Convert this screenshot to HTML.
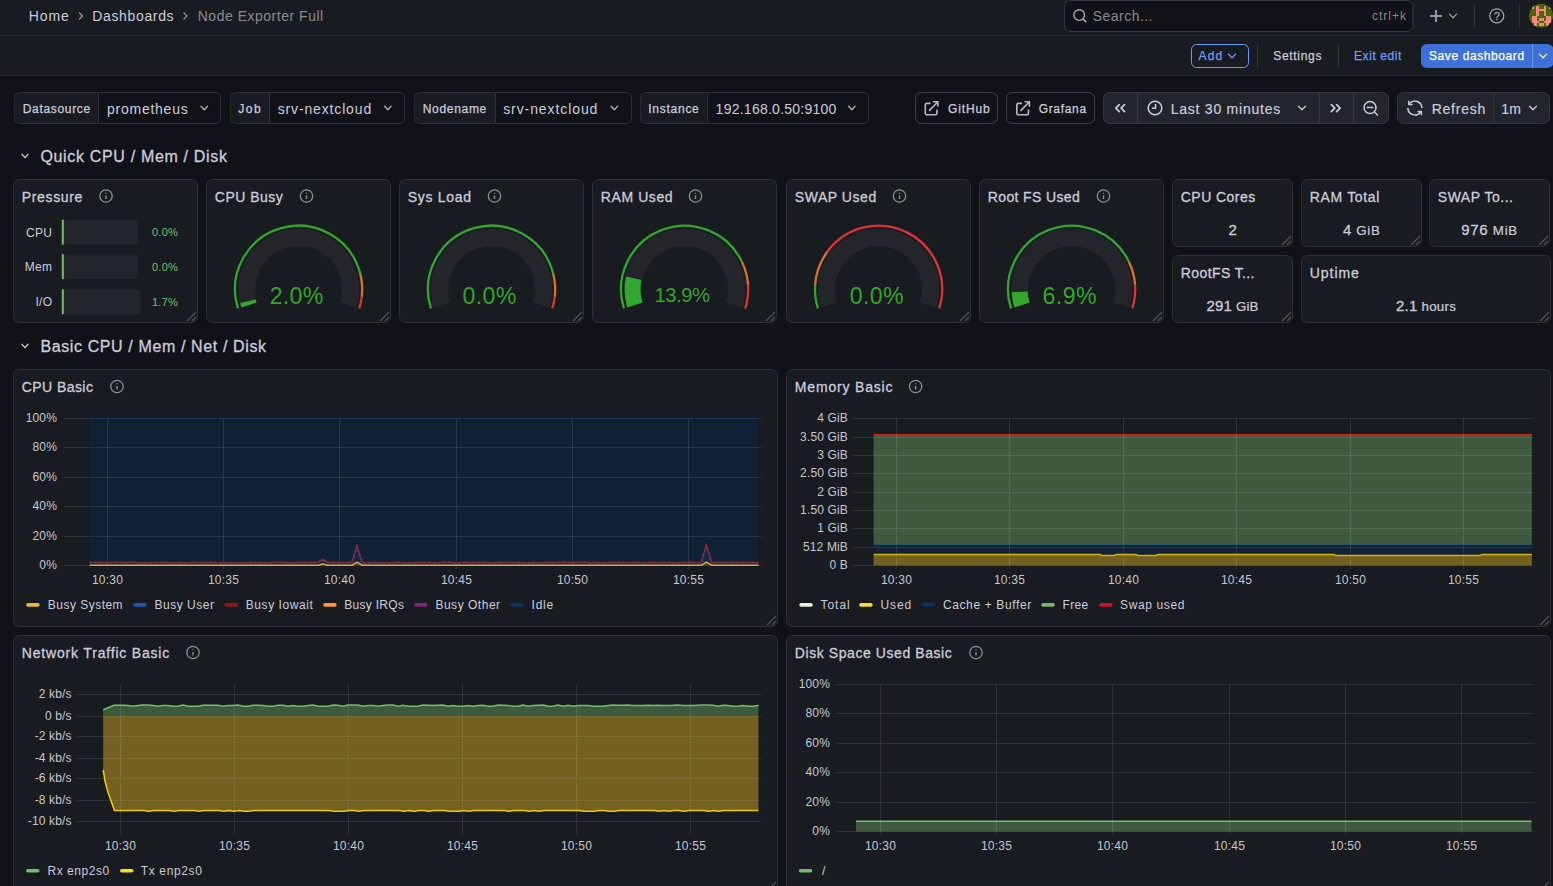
<!DOCTYPE html><html><head><meta charset="utf-8"><style>html,body{margin:0;padding:0;background:#111217;overflow:hidden}svg{display:block}</style></head><body><svg width="1553" height="886" viewBox="0 0 1553 886" font-family="Liberation Sans, sans-serif"><rect x="0" y="0" width="1553" height="886" rx="0" fill="#111217"/><rect x="0" y="0" width="1553" height="35" rx="0" fill="#181b1f"/><rect x="0" y="35" width="1553" height="1" rx="0" fill="#2a2c31"/><rect x="0" y="36" width="1553" height="39" rx="0" fill="#181b1f"/><rect x="0" y="75" width="1553" height="1" rx="0" fill="#2a2c31"/><text x="28.7" y="21" font-size="14" fill="#ccccdc" font-weight="400" text-anchor="start" textLength="40.1" lengthAdjust="spacing" >Home</text><path d="M79,12.5 L82.5,16 L79,19.5" stroke="rgba(204,204,220,0.65)" fill="none" stroke-width="1.3" /><text x="92.2" y="21" font-size="14" fill="#ccccdc" font-weight="400" text-anchor="start" textLength="81.4" lengthAdjust="spacing" >Dashboards</text><path d="M183.5,12.5 L187,16 L183.5,19.5" stroke="rgba(204,204,220,0.65)" fill="none" stroke-width="1.3" /><text x="197.7" y="21" font-size="14" fill="rgba(204,204,220,0.65)" font-weight="400" text-anchor="start" textLength="125.5" lengthAdjust="spacing" >Node Exporter Full</text><rect x="1064.5" y="0.5" width="348.5" height="31" rx="6" fill="#111217" stroke="#34363b" stroke-width="1"/><circle cx="1079.2" cy="15.1" r="5.3" stroke="#a8a8b2" stroke-width="1.4" fill="none"/><line x1="1083" y1="18.9" x2="1086.2" y2="22.1" stroke="#a8a8b2" stroke-width="1.5" /><text x="1092.7" y="21" font-size="14" fill="rgba(204,204,220,0.65)" font-weight="400" text-anchor="start" textLength="59.8" lengthAdjust="spacing" >Search...</text><text x="1371.9" y="20" font-size="12" fill="rgba(204,204,220,0.65)" font-weight="400" text-anchor="start" textLength="34" lengthAdjust="spacing" >ctrl+k</text><line x1="1430" y1="16" x2="1442" y2="16" stroke="#a0a1aa" stroke-width="1.8" /><line x1="1436" y1="10" x2="1436" y2="22" stroke="#a0a1aa" stroke-width="1.8" /><path d="M1449.5,14.1 L1453,17.9 L1456.5,14.1" stroke="#a0a1aa" fill="none" stroke-width="1.3" stroke-linecap="round" stroke-linejoin="round"/><line x1="1474.5" y1="4" x2="1474.5" y2="28" stroke="#2f3136" stroke-width="1" /><circle cx="1496.8" cy="15.8" r="7" stroke="#a0a1aa" stroke-width="1.3" fill="none"/><text x="1496.9" y="19.6" font-size="10.5" fill="#a0a1aa" font-weight="400" text-anchor="middle" letter-spacing="0" stroke="#a0a1aa" stroke-width="0.3" >?</text><line x1="1519.5" y1="4" x2="1519.5" y2="28" stroke="#2f3136" stroke-width="1" /><clipPath id="av"><circle cx="1541" cy="15.8" r="12"/></clipPath><g clip-path="url(#av)" shape-rendering="crispEdges"><rect x="1528" y="3" width="26" height="26" fill="#476608"/><rect x="1531.60" y="6.10" width="2.6" height="2.6" fill="#f08a7e"/><rect x="1536.44" y="6.10" width="2.6" height="2.6" fill="#f08a7e"/><rect x="1543.70" y="6.10" width="2.6" height="2.6" fill="#f08a7e"/><rect x="1548.54" y="6.10" width="2.6" height="2.6" fill="#f08a7e"/><rect x="1536.44" y="8.52" width="2.6" height="2.6" fill="#f08a7e"/><rect x="1538.86" y="8.52" width="2.6" height="2.6" fill="#f08a7e"/><rect x="1541.28" y="8.52" width="2.6" height="2.6" fill="#f08a7e"/><rect x="1543.70" y="8.52" width="2.6" height="2.6" fill="#f08a7e"/><rect x="1536.44" y="10.94" width="2.6" height="2.6" fill="#f08a7e"/><rect x="1543.70" y="10.94" width="2.6" height="2.6" fill="#f08a7e"/><rect x="1536.44" y="13.36" width="2.6" height="2.6" fill="#f08a7e"/><rect x="1543.70" y="13.36" width="2.6" height="2.6" fill="#f08a7e"/><rect x="1531.60" y="15.78" width="2.6" height="2.6" fill="#f08a7e"/><rect x="1534.02" y="15.78" width="2.6" height="2.6" fill="#f08a7e"/><rect x="1546.12" y="15.78" width="2.6" height="2.6" fill="#f08a7e"/><rect x="1548.54" y="15.78" width="2.6" height="2.6" fill="#f08a7e"/><rect x="1531.60" y="18.20" width="2.6" height="2.6" fill="#f08a7e"/><rect x="1534.02" y="18.20" width="2.6" height="2.6" fill="#f08a7e"/><rect x="1538.86" y="18.20" width="2.6" height="2.6" fill="#f08a7e"/><rect x="1541.28" y="18.20" width="2.6" height="2.6" fill="#f08a7e"/><rect x="1546.12" y="18.20" width="2.6" height="2.6" fill="#f08a7e"/><rect x="1548.54" y="18.20" width="2.6" height="2.6" fill="#f08a7e"/><rect x="1531.60" y="20.62" width="2.6" height="2.6" fill="#f08a7e"/><rect x="1534.02" y="20.62" width="2.6" height="2.6" fill="#f08a7e"/><rect x="1536.44" y="20.62" width="2.6" height="2.6" fill="#f08a7e"/><rect x="1543.70" y="20.62" width="2.6" height="2.6" fill="#f08a7e"/><rect x="1546.12" y="20.62" width="2.6" height="2.6" fill="#f08a7e"/><rect x="1548.54" y="20.62" width="2.6" height="2.6" fill="#f08a7e"/><rect x="1534.02" y="23.04" width="2.6" height="2.6" fill="#f08a7e"/><rect x="1538.86" y="23.04" width="2.6" height="2.6" fill="#f08a7e"/><rect x="1541.28" y="23.04" width="2.6" height="2.6" fill="#f08a7e"/><rect x="1546.12" y="23.04" width="2.6" height="2.6" fill="#f08a7e"/></g><rect x="1191.5" y="44.5" width="57" height="23" rx="5" fill="none" stroke="#6e9fff" stroke-width="1"/><text x="1198.6000000000001" y="60" font-size="12" fill="#6e9fff" font-weight="400" text-anchor="start" textLength="23.5" lengthAdjust="spacing" stroke="#6e9fff" stroke-width="0.25" >Add</text><path d="M1228.5,54.1 L1232,57.9 L1235.5,54.1" stroke="#6e9fff" fill="none" stroke-width="1.3" stroke-linecap="round" stroke-linejoin="round"/><line x1="1257.5" y1="44" x2="1257.5" y2="68" stroke="#2f3136" stroke-width="1" /><text x="1273.3" y="60" font-size="12" fill="#ccccdc" font-weight="400" text-anchor="start" textLength="48.1" lengthAdjust="spacing" stroke="#ccccdc" stroke-width="0.25" >Settings</text><line x1="1338.5" y1="44" x2="1338.5" y2="68" stroke="#2f3136" stroke-width="1" /><text x="1354.0" y="60" font-size="12" fill="#6e9fff" font-weight="400" text-anchor="start" textLength="47.3" lengthAdjust="spacing" stroke="#6e9fff" stroke-width="0.25" >Exit edit</text><rect x="1421" y="44" width="132.5" height="24" rx="6" fill="#3d71d9"/><text x="1429.0" y="60" font-size="12" fill="#ffffff" font-weight="400" text-anchor="start" textLength="95.1" lengthAdjust="spacing" stroke="#ffffff" stroke-width="0.25" >Save dashboard</text><line x1="1532.5" y1="44" x2="1532.5" y2="68" stroke="rgba(255,255,255,0.25)" stroke-width="1" /><path d="M1539.5,54.1 L1543,57.9 L1546.5,54.1" stroke="#ffffff" fill="none" stroke-width="1.3" stroke-linecap="round" stroke-linejoin="round"/><rect x="14.5" y="92.5" width="206" height="31" rx="5" fill="#111217" stroke="#2f3136" stroke-width="1"/><path d="M98,93 L19.5,93 A5,5 0 0 0 14.5,98 L14.5,118 A5,5 0 0 0 19.5,123 L98,123 Z" fill="#181b1f"/><line x1="98.5" y1="92.5" x2="98.5" y2="123.5" stroke="#2f3136" stroke-width="1" /><text x="22.7" y="112.5" font-size="12" fill="#ccccdc" font-weight="400" text-anchor="start" textLength="67.5" lengthAdjust="spacing" stroke="#ccccdc" stroke-width="0.25" >Datasource</text><text x="107.0" y="113.5" font-size="14" fill="#ccccdc" font-weight="400" text-anchor="start" textLength="80.7" lengthAdjust="spacing" >prometheus</text><path d="M201.05,106.25 L204.3,109.75 L207.55,106.25" stroke="#b0b0ba" fill="none" stroke-width="1.3" stroke-linecap="round" stroke-linejoin="round"/><rect x="230.5" y="92.5" width="174" height="31" rx="5" fill="#111217" stroke="#2f3136" stroke-width="1"/><path d="M269,93 L235.5,93 A5,5 0 0 0 230.5,98 L230.5,118 A5,5 0 0 0 235.5,123 L269,123 Z" fill="#181b1f"/><line x1="269.5" y1="92.5" x2="269.5" y2="123.5" stroke="#2f3136" stroke-width="1" /><text x="238.2" y="112.5" font-size="12" fill="#ccccdc" font-weight="400" text-anchor="start" textLength="22.5" lengthAdjust="spacing" stroke="#ccccdc" stroke-width="0.25" >Job</text><text x="277.7" y="113.5" font-size="14" fill="#ccccdc" font-weight="400" text-anchor="start" textLength="93.5" lengthAdjust="spacing" >srv-nextcloud</text><path d="M384.55,106.25 L387.8,109.75 L391.05,106.25" stroke="#b0b0ba" fill="none" stroke-width="1.3" stroke-linecap="round" stroke-linejoin="round"/><rect x="414.5" y="92.5" width="217" height="31" rx="5" fill="#111217" stroke="#2f3136" stroke-width="1"/><path d="M495,93 L419.5,93 A5,5 0 0 0 414.5,98 L414.5,118 A5,5 0 0 0 419.5,123 L495,123 Z" fill="#181b1f"/><line x1="495.5" y1="92.5" x2="495.5" y2="123.5" stroke="#2f3136" stroke-width="1" /><text x="422.7" y="112.5" font-size="12" fill="#ccccdc" font-weight="400" text-anchor="start" textLength="63.6" lengthAdjust="spacing" stroke="#ccccdc" stroke-width="0.25" >Nodename</text><text x="503.2" y="113.5" font-size="14" fill="#ccccdc" font-weight="400" text-anchor="start" textLength="94.2" lengthAdjust="spacing" >srv-nextcloud</text><path d="M611.05,106.25 L614.3,109.75 L617.55,106.25" stroke="#b0b0ba" fill="none" stroke-width="1.3" stroke-linecap="round" stroke-linejoin="round"/><rect x="640.5" y="92.5" width="228" height="31" rx="5" fill="#111217" stroke="#2f3136" stroke-width="1"/><path d="M707,93 L645.5,93 A5,5 0 0 0 640.5,98 L640.5,118 A5,5 0 0 0 645.5,123 L707,123 Z" fill="#181b1f"/><line x1="707.5" y1="92.5" x2="707.5" y2="123.5" stroke="#2f3136" stroke-width="1" /><text x="648.2" y="112.5" font-size="12" fill="#ccccdc" font-weight="400" text-anchor="start" textLength="50.6" lengthAdjust="spacing" stroke="#ccccdc" stroke-width="0.25" >Instance</text><text x="715.6" y="113.5" font-size="14" fill="#ccccdc" font-weight="400" text-anchor="start" textLength="120.8" lengthAdjust="spacing" >192.168.0.50:9100</text><path d="M848.55,106.25 L851.8,109.75 L855.05,106.25" stroke="#b0b0ba" fill="none" stroke-width="1.3" stroke-linecap="round" stroke-linejoin="round"/><rect x="915.5" y="92.5" width="82" height="31" rx="6" fill="none" stroke="#3e4046" stroke-width="1"/><path d="M930.5,103.4 L926.8,103.4 Q925.3,103.4 925.3,104.9 L925.3,113.2 Q925.3,114.7 926.8,114.7 L935.5,114.7 Q937.0,114.7 937.0,113.2 L937.0,109.60000000000001" stroke="#b8b8c4" fill="none" stroke-width="1.6" /><path d="M929.5,110.4 L937.6999999999999,102.0" stroke="#b8b8c4" fill="none" stroke-width="1.6" stroke-linecap="round"/><path d="M933.5999999999999,101.80000000000001 L937.9,101.80000000000001 L937.9,106.10000000000001" stroke="#b8b8c4" fill="none" stroke-width="1.6" stroke-linecap="round" stroke-linejoin="round"/><text x="948.0" y="113" font-size="12" fill="#ccccdc" font-weight="400" text-anchor="start" textLength="41.8" lengthAdjust="spacing" stroke="#ccccdc" stroke-width="0.25" >GitHub</text><rect x="1006.5" y="92.5" width="88" height="31" rx="6" fill="none" stroke="#3e4046" stroke-width="1"/><path d="M1022.0,103.4 L1018.3,103.4 Q1016.8,103.4 1016.8,104.9 L1016.8,113.2 Q1016.8,114.7 1018.3,114.7 L1027.0,114.7 Q1028.5,114.7 1028.5,113.2 L1028.5,109.60000000000001" stroke="#b8b8c4" fill="none" stroke-width="1.6" /><path d="M1021.0,110.4 L1029.2,102.0" stroke="#b8b8c4" fill="none" stroke-width="1.6" stroke-linecap="round"/><path d="M1025.1,101.80000000000001 L1029.3999999999999,101.80000000000001 L1029.3999999999999,106.10000000000001" stroke="#b8b8c4" fill="none" stroke-width="1.6" stroke-linecap="round" stroke-linejoin="round"/><text x="1038.7" y="113" font-size="12" fill="#ccccdc" font-weight="400" text-anchor="start" textLength="47.4" lengthAdjust="spacing" stroke="#ccccdc" stroke-width="0.25" >Grafana</text><rect x="1103.5" y="92.5" width="285" height="31" rx="6" fill="#22252b" stroke="#34363c" stroke-width="1"/><line x1="1137.5" y1="93" x2="1137.5" y2="123" stroke="#34363c" stroke-width="1" /><line x1="1319.5" y1="93" x2="1319.5" y2="123" stroke="#34363c" stroke-width="1" /><line x1="1353.5" y1="93" x2="1353.5" y2="123" stroke="#34363c" stroke-width="1" /><path d="M1119.3,104.6 L1115.8,108.1 L1119.3,111.6 M1124.6,104.6 L1121.1,108.1 L1124.6,111.6" stroke="#ccccdc" fill="none" stroke-width="1.8" stroke-linecap="round" stroke-linejoin="round"/><circle cx="1155" cy="108" r="6.8" stroke="#ccccdc" stroke-width="1.5" fill="none"/><path d="M1155.5,104 L1155.5,108.3 L1152,108.3" stroke="#ccccdc" fill="none" stroke-width="1.5" /><text x="1170.7" y="113.5" font-size="14" fill="#ccccdc" font-weight="400" text-anchor="start" textLength="109.5" lengthAdjust="spacing" stroke="#ccccdc" stroke-width="0.2" >Last 30 minutes</text><path d="M1298.5,106.2 L1302,109.8 L1305.5,106.2" stroke="#ccccdc" fill="none" stroke-width="1.3" stroke-linecap="round" stroke-linejoin="round"/><path d="M1331.3,104.6 L1334.8,108.1 L1331.3,111.6 M1336.6,104.6 L1340.1,108.1 L1336.6,111.6" stroke="#ccccdc" fill="none" stroke-width="1.8" stroke-linecap="round" stroke-linejoin="round"/><circle cx="1370" cy="107.5" r="6" stroke="#ccccdc" stroke-width="1.5" fill="none"/><line x1="1366.5" y1="107.5" x2="1373.5" y2="107.5" stroke="#ccccdc" stroke-width="1.5" /><line x1="1374.5" y1="112" x2="1378" y2="115.5" stroke="#ccccdc" stroke-width="1.5" /><rect x="1397.5" y="92.5" width="152" height="31" rx="6" fill="#22252b" stroke="#34363c" stroke-width="1"/><line x1="1493.5" y1="93" x2="1493.5" y2="123" stroke="#34363c" stroke-width="1" /><path d="M1409.6,103.6 A7,7 0 0 1 1421.9,108 M1407.9,108 A7,7 0 0 0 1420.6,112" stroke="#ccccdc" fill="none" stroke-width="1.5" /><path d="M1408.8,100.8 L1408.8,104.5 L1412.6,104.5 M1417.6,111.5 L1421.4,111.5 L1421.4,115.2" stroke="#ccccdc" fill="none" stroke-width="1.5" stroke-linejoin="round"/><text x="1431.7" y="113.5" font-size="14" fill="#ccccdc" font-weight="400" text-anchor="start" textLength="53.5" lengthAdjust="spacing" stroke="#ccccdc" stroke-width="0.2" >Refresh</text><text x="1501.2" y="113.5" font-size="14" fill="#ccccdc" font-weight="400" text-anchor="start" textLength="19.7" lengthAdjust="spacing" stroke="#ccccdc" stroke-width="0.2" >1m</text><path d="M1529.5,106.2 L1533,109.8 L1536.5,106.2" stroke="#ccccdc" fill="none" stroke-width="1.3" stroke-linecap="round" stroke-linejoin="round"/><path d="M22.0,154.35 L25,157.65 L28.0,154.35" stroke="#ccccdc" fill="none" stroke-width="1.4" stroke-linecap="round" stroke-linejoin="round"/><text x="40.400000000000006" y="161.5" font-size="16" fill="#ccccdc" font-weight="400" text-anchor="start" textLength="186.5" lengthAdjust="spacing" stroke="#ccccdc" stroke-width="0.3" >Quick CPU / Mem / Disk</text><rect x="13.5" y="179.5" width="184.0" height="143.0" rx="6" fill="#181b1f" stroke="#2e3035" stroke-width="1"/><text x="21.8" y="201.5" font-size="14" fill="#ccccdc" font-weight="400" text-anchor="start" textLength="60.5" lengthAdjust="spacing" stroke="#ccccdc" stroke-width="0.3" >Pressure</text><line x1="187.0" y1="321.0" x2="196.0" y2="312.0" stroke="rgba(204,204,220,0.3)" stroke-width="1.2" /><line x1="192.0" y1="321.0" x2="196.0" y2="317.0" stroke="rgba(204,204,220,0.3)" stroke-width="1.2" /><circle cx="106" cy="196" r="6.2" stroke="rgba(204,204,220,0.65)" stroke-width="1.3" fill="none"/><line x1="106" y1="195.5" x2="106" y2="199" stroke="rgba(204,204,220,0.65)" stroke-width="1.4" /><line x1="106" y1="192.8" x2="106" y2="193.8" stroke="rgba(204,204,220,0.65)" stroke-width="1.4" /><text x="52.3" y="236.7" font-size="12" fill="#ccccdc" font-weight="400" text-anchor="end" letter-spacing="0.3" >CPU</text><rect x="63.5" y="219.7" width="74" height="25" rx="3" fill="#22252b"/><rect x="61.8" y="219.7" width="2" height="25" rx="0" fill="#73bf69"/><text x="178.2" y="236.2" font-size="11" fill="#73bf69" font-weight="400" text-anchor="end" letter-spacing="0.3" >0.0%</text><text x="52.3" y="271.2" font-size="12" fill="#ccccdc" font-weight="400" text-anchor="end" letter-spacing="0.3" >Mem</text><rect x="63.5" y="254.2" width="74" height="25" rx="3" fill="#22252b"/><rect x="61.8" y="254.2" width="2" height="25" rx="0" fill="#73bf69"/><text x="178.2" y="270.7" font-size="11" fill="#73bf69" font-weight="400" text-anchor="end" letter-spacing="0.3" >0.0%</text><text x="52.3" y="306.2" font-size="12" fill="#ccccdc" font-weight="400" text-anchor="end" letter-spacing="0.3" >I/O</text><rect x="63.5" y="289.2" width="77" height="25" rx="3" fill="#22252b"/><rect x="61.8" y="289.2" width="2" height="25" rx="0" fill="#73bf69"/><text x="178.2" y="305.7" font-size="11" fill="#73bf69" font-weight="400" text-anchor="end" letter-spacing="0.3" >1.7%</text><rect x="206.5" y="179.5" width="184.0" height="143.0" rx="6" fill="#181b1f" stroke="#2e3035" stroke-width="1"/><text x="214.79999999999998" y="201.5" font-size="14" fill="#ccccdc" font-weight="400" text-anchor="start" textLength="68" lengthAdjust="spacing" stroke="#ccccdc" stroke-width="0.3" >CPU Busy</text><line x1="380.0" y1="321.0" x2="389.0" y2="312.0" stroke="rgba(204,204,220,0.3)" stroke-width="1.2" /><line x1="385.0" y1="321.0" x2="389.0" y2="317.0" stroke="rgba(204,204,220,0.3)" stroke-width="1.2" /><path d="M248.96,305.00 A52.05,52.05 0 1 1 348.24,305.00" stroke="#23252b" fill="none" stroke-width="17.4" /><path d="M237.94,308.47 A63.6,63.6 0 1 1 360.10,273.16" stroke="rgba(50,172,45,0.97)" fill="none" stroke-width="2.3" /><path d="M360.10,273.16 A63.6,63.6 0 0 1 361.76,296.83" stroke="rgba(237,129,40,0.89)" fill="none" stroke-width="2.3" /><path d="M361.76,296.83 A63.6,63.6 0 0 1 359.26,308.47" stroke="rgba(245,54,54,0.9)" fill="none" stroke-width="2.3" /><path d="M248.96,305.00 A52.05,52.05 0 0 1 247.93,301.24" stroke="rgba(50,172,45,0.97)" fill="none" stroke-width="15.899999999999999" /><text x="269.7" y="303.5" font-size="23.2" fill="rgba(50,172,45,0.97)" font-weight="400" text-anchor="start" textLength="53.6" lengthAdjust="spacing" >2.0%</text><circle cx="306.5" cy="196" r="6.2" stroke="rgba(204,204,220,0.65)" stroke-width="1.3" fill="none"/><line x1="306.5" y1="195.5" x2="306.5" y2="199" stroke="rgba(204,204,220,0.65)" stroke-width="1.4" /><line x1="306.5" y1="192.8" x2="306.5" y2="193.8" stroke="rgba(204,204,220,0.65)" stroke-width="1.4" /><rect x="399.5" y="179.5" width="184.0" height="143.0" rx="6" fill="#181b1f" stroke="#2e3035" stroke-width="1"/><text x="407.8" y="201.5" font-size="14" fill="#ccccdc" font-weight="400" text-anchor="start" textLength="63.3" lengthAdjust="spacing" stroke="#ccccdc" stroke-width="0.3" >Sys Load</text><line x1="573.0" y1="321.0" x2="582.0" y2="312.0" stroke="rgba(204,204,220,0.3)" stroke-width="1.2" /><line x1="578.0" y1="321.0" x2="582.0" y2="317.0" stroke="rgba(204,204,220,0.3)" stroke-width="1.2" /><path d="M441.96,305.00 A52.05,52.05 0 1 1 541.24,305.00" stroke="#23252b" fill="none" stroke-width="17.4" /><path d="M430.94,308.47 A63.6,63.6 0 1 1 553.10,273.16" stroke="rgba(50,172,45,0.97)" fill="none" stroke-width="2.3" /><path d="M553.10,273.16 A63.6,63.6 0 0 1 554.76,296.83" stroke="rgba(237,129,40,0.89)" fill="none" stroke-width="2.3" /><path d="M554.76,296.83 A63.6,63.6 0 0 1 552.26,308.47" stroke="rgba(245,54,54,0.9)" fill="none" stroke-width="2.3" /><text x="462.59999999999997" y="303.5" font-size="23.2" fill="rgba(50,172,45,0.97)" font-weight="400" text-anchor="start" textLength="53.8" lengthAdjust="spacing" >0.0%</text><circle cx="494.5" cy="196" r="6.2" stroke="rgba(204,204,220,0.65)" stroke-width="1.3" fill="none"/><line x1="494.5" y1="195.5" x2="494.5" y2="199" stroke="rgba(204,204,220,0.65)" stroke-width="1.4" /><line x1="494.5" y1="192.8" x2="494.5" y2="193.8" stroke="rgba(204,204,220,0.65)" stroke-width="1.4" /><rect x="592.5" y="179.5" width="184.0" height="143.0" rx="6" fill="#181b1f" stroke="#2e3035" stroke-width="1"/><text x="600.8000000000001" y="201.5" font-size="14" fill="#ccccdc" font-weight="400" text-anchor="start" textLength="71.8" lengthAdjust="spacing" stroke="#ccccdc" stroke-width="0.3" >RAM Used</text><line x1="766.0" y1="321.0" x2="775.0" y2="312.0" stroke="rgba(204,204,220,0.3)" stroke-width="1.2" /><line x1="771.0" y1="321.0" x2="775.0" y2="317.0" stroke="rgba(204,204,220,0.3)" stroke-width="1.2" /><path d="M634.96,305.00 A52.05,52.05 0 1 1 734.24,305.00" stroke="#23252b" fill="none" stroke-width="17.4" /><path d="M623.94,308.47 A63.6,63.6 0 0 1 742.00,261.97" stroke="rgba(50,172,45,0.97)" fill="none" stroke-width="2.3" /><path d="M742.00,261.97 A63.6,63.6 0 0 1 748.05,284.91" stroke="rgba(237,129,40,0.89)" fill="none" stroke-width="2.3" /><path d="M748.05,284.91 A63.6,63.6 0 0 1 745.26,308.47" stroke="rgba(245,54,54,0.9)" fill="none" stroke-width="2.3" /><path d="M634.96,305.00 A52.05,52.05 0 0 1 633.76,278.19" stroke="rgba(50,172,45,0.97)" fill="none" stroke-width="15.899999999999999" /><text x="654.6" y="302.2" font-size="20.3" fill="rgba(50,172,45,0.97)" font-weight="400" text-anchor="start" textLength="55.5" lengthAdjust="spacing" >13.9%</text><circle cx="695.5" cy="196" r="6.2" stroke="rgba(204,204,220,0.65)" stroke-width="1.3" fill="none"/><line x1="695.5" y1="195.5" x2="695.5" y2="199" stroke="rgba(204,204,220,0.65)" stroke-width="1.4" /><line x1="695.5" y1="192.8" x2="695.5" y2="193.8" stroke="rgba(204,204,220,0.65)" stroke-width="1.4" /><rect x="786.5" y="179.5" width="184.0" height="143.0" rx="6" fill="#181b1f" stroke="#2e3035" stroke-width="1"/><text x="794.8000000000001" y="201.5" font-size="14" fill="#ccccdc" font-weight="400" text-anchor="start" textLength="81.4" lengthAdjust="spacing" stroke="#ccccdc" stroke-width="0.3" >SWAP Used</text><line x1="960.0" y1="321.0" x2="969.0" y2="312.0" stroke="rgba(204,204,220,0.3)" stroke-width="1.2" /><line x1="965.0" y1="321.0" x2="969.0" y2="317.0" stroke="rgba(204,204,220,0.3)" stroke-width="1.2" /><path d="M828.96,305.00 A52.05,52.05 0 1 1 928.24,305.00" stroke="#23252b" fill="none" stroke-width="17.4" /><path d="M817.94,308.47 A63.6,63.6 0 0 1 815.15,284.91" stroke="rgba(50,172,45,0.97)" fill="none" stroke-width="2.3" /><path d="M815.15,284.91 A63.6,63.6 0 0 1 827.31,251.74" stroke="rgba(237,129,40,0.89)" fill="none" stroke-width="2.3" /><path d="M827.31,251.74 A63.6,63.6 0 0 1 939.26,308.47" stroke="rgba(245,54,54,0.9)" fill="none" stroke-width="2.3" /><text x="849.8000000000001" y="303.5" font-size="23.2" fill="rgba(50,172,45,0.97)" font-weight="400" text-anchor="start" textLength="53.7" lengthAdjust="spacing" >0.0%</text><circle cx="899.5" cy="196" r="6.2" stroke="rgba(204,204,220,0.65)" stroke-width="1.3" fill="none"/><line x1="899.5" y1="195.5" x2="899.5" y2="199" stroke="rgba(204,204,220,0.65)" stroke-width="1.4" /><line x1="899.5" y1="192.8" x2="899.5" y2="193.8" stroke="rgba(204,204,220,0.65)" stroke-width="1.4" /><rect x="979.5" y="179.5" width="184.0" height="143.0" rx="6" fill="#181b1f" stroke="#2e3035" stroke-width="1"/><text x="987.8000000000001" y="201.5" font-size="14" fill="#ccccdc" font-weight="400" text-anchor="start" textLength="91.9" lengthAdjust="spacing" stroke="#ccccdc" stroke-width="0.3" >Root FS Used</text><line x1="1153.0" y1="321.0" x2="1162.0" y2="312.0" stroke="rgba(204,204,220,0.3)" stroke-width="1.2" /><line x1="1158.0" y1="321.0" x2="1162.0" y2="317.0" stroke="rgba(204,204,220,0.3)" stroke-width="1.2" /><path d="M1021.96,305.00 A52.05,52.05 0 1 1 1121.24,305.00" stroke="#23252b" fill="none" stroke-width="17.4" /><path d="M1010.94,308.47 A63.6,63.6 0 0 1 1129.00,261.97" stroke="rgba(50,172,45,0.97)" fill="none" stroke-width="2.3" /><path d="M1129.00,261.97 A63.6,63.6 0 0 1 1135.05,284.91" stroke="rgba(237,129,40,0.89)" fill="none" stroke-width="2.3" /><path d="M1135.05,284.91 A63.6,63.6 0 0 1 1132.26,308.47" stroke="rgba(245,54,54,0.9)" fill="none" stroke-width="2.3" /><path d="M1021.96,305.00 A52.05,52.05 0 0 1 1019.61,291.77" stroke="rgba(50,172,45,0.97)" fill="none" stroke-width="15.899999999999999" /><text x="1042.4" y="303.5" font-size="23.2" fill="rgba(50,172,45,0.97)" font-weight="400" text-anchor="start" textLength="54.2" lengthAdjust="spacing" >6.9%</text><circle cx="1103.5" cy="196" r="6.2" stroke="rgba(204,204,220,0.65)" stroke-width="1.3" fill="none"/><line x1="1103.5" y1="195.5" x2="1103.5" y2="199" stroke="rgba(204,204,220,0.65)" stroke-width="1.4" /><line x1="1103.5" y1="192.8" x2="1103.5" y2="193.8" stroke="rgba(204,204,220,0.65)" stroke-width="1.4" /><rect x="1172.5" y="179.5" width="120.0" height="67.0" rx="6" fill="#181b1f" stroke="#2e3035" stroke-width="1"/><text x="1180.8" y="201.5" font-size="14" fill="#ccccdc" font-weight="400" text-anchor="start" textLength="74.4" lengthAdjust="spacing" stroke="#ccccdc" stroke-width="0.3" >CPU Cores</text><line x1="1282.0" y1="245.0" x2="1291.0" y2="236.0" stroke="rgba(204,204,220,0.3)" stroke-width="1.2" /><line x1="1287.0" y1="245.0" x2="1291.0" y2="241.0" stroke="rgba(204,204,220,0.3)" stroke-width="1.2" /><text x="1228.4" y="234.8" font-size="15" fill="#ccccdc" font-weight="400" text-anchor="start" letter-spacing="0" stroke="#ccccdc" stroke-width="0.3" >2</text><rect x="1301.5" y="179.5" width="120.0" height="67.0" rx="6" fill="#181b1f" stroke="#2e3035" stroke-width="1"/><text x="1309.8" y="201.5" font-size="14" fill="#ccccdc" font-weight="400" text-anchor="start" textLength="69.6" lengthAdjust="spacing" stroke="#ccccdc" stroke-width="0.3" >RAM Total</text><line x1="1411.0" y1="245.0" x2="1420.0" y2="236.0" stroke="rgba(204,204,220,0.3)" stroke-width="1.2" /><line x1="1416.0" y1="245.0" x2="1420.0" y2="241.0" stroke="rgba(204,204,220,0.3)" stroke-width="1.2" /><text x="1342.9" y="234.8" font-size="15" fill="#ccccdc" stroke="#ccccdc" stroke-width="0.3" textLength="36.9" lengthAdjust="spacing">4<tspan font-size="13.3" stroke-width="0.22"> GiB</tspan></text><rect x="1429.5" y="179.5" width="120.0" height="67.0" rx="6" fill="#181b1f" stroke="#2e3035" stroke-width="1"/><text x="1437.8" y="201.5" font-size="14" fill="#ccccdc" font-weight="400" text-anchor="start" textLength="75.2" lengthAdjust="spacing" stroke="#ccccdc" stroke-width="0.3" >SWAP To...</text><line x1="1539.0" y1="245.0" x2="1548.0" y2="236.0" stroke="rgba(204,204,220,0.3)" stroke-width="1.2" /><line x1="1544.0" y1="245.0" x2="1548.0" y2="241.0" stroke="rgba(204,204,220,0.3)" stroke-width="1.2" /><text x="1461.2" y="234.8" font-size="15" fill="#ccccdc" stroke="#ccccdc" stroke-width="0.3" textLength="56" lengthAdjust="spacing">976<tspan font-size="13.3" stroke-width="0.22"> MiB</tspan></text><rect x="1172.5" y="255.5" width="120.0" height="67.0" rx="6" fill="#181b1f" stroke="#2e3035" stroke-width="1"/><text x="1180.8" y="277.5" font-size="14" fill="#ccccdc" font-weight="400" text-anchor="start" textLength="73.7" lengthAdjust="spacing" stroke="#ccccdc" stroke-width="0.3" >RootFS T...</text><line x1="1282.0" y1="321.0" x2="1291.0" y2="312.0" stroke="rgba(204,204,220,0.3)" stroke-width="1.2" /><line x1="1287.0" y1="321.0" x2="1291.0" y2="317.0" stroke="rgba(204,204,220,0.3)" stroke-width="1.2" /><text x="1206.5" y="310.8" font-size="15" fill="#ccccdc" stroke="#ccccdc" stroke-width="0.3" textLength="51.9" lengthAdjust="spacing">291<tspan font-size="13.3" stroke-width="0.22"> GiB</tspan></text><rect x="1301.5" y="255.5" width="249.0" height="67.0" rx="6" fill="#181b1f" stroke="#2e3035" stroke-width="1"/><text x="1309.8" y="277.5" font-size="14" fill="#ccccdc" font-weight="400" text-anchor="start" textLength="49.1" lengthAdjust="spacing" stroke="#ccccdc" stroke-width="0.3" >Uptime</text><line x1="1540.0" y1="321.0" x2="1549.0" y2="312.0" stroke="rgba(204,204,220,0.3)" stroke-width="1.2" /><line x1="1545.0" y1="321.0" x2="1549.0" y2="317.0" stroke="rgba(204,204,220,0.3)" stroke-width="1.2" /><text x="1395.9" y="310.8" font-size="15" fill="#ccccdc" stroke="#ccccdc" stroke-width="0.3" textLength="60" lengthAdjust="spacing">2.1<tspan font-size="13.3" stroke-width="0.22"> hours</tspan></text><path d="M22.0,344.35 L25,347.65 L28.0,344.35" stroke="#ccccdc" fill="none" stroke-width="1.4" stroke-linecap="round" stroke-linejoin="round"/><text x="40.400000000000006" y="351.5" font-size="16" fill="#ccccdc" font-weight="400" text-anchor="start" textLength="225.6" lengthAdjust="spacing" stroke="#ccccdc" stroke-width="0.3" >Basic CPU / Mem / Net / Disk</text><rect x="13.5" y="369.5" width="764.0" height="257.0" rx="6" fill="#181b1f" stroke="#2e3035" stroke-width="1"/><text x="21.8" y="391.5" font-size="14" fill="#ccccdc" font-weight="400" text-anchor="start" textLength="71.1" lengthAdjust="spacing" stroke="#ccccdc" stroke-width="0.3" >CPU Basic</text><line x1="767.0" y1="625.0" x2="776.0" y2="616.0" stroke="rgba(204,204,220,0.3)" stroke-width="1.2" /><line x1="772.0" y1="625.0" x2="776.0" y2="621.0" stroke="rgba(204,204,220,0.3)" stroke-width="1.2" /><circle cx="117" cy="386.5" r="6.2" stroke="rgba(204,204,220,0.65)" stroke-width="1.3" fill="none"/><line x1="117" y1="386.0" x2="117" y2="389.5" stroke="rgba(204,204,220,0.65)" stroke-width="1.4" /><line x1="117" y1="383.3" x2="117" y2="384.3" stroke="rgba(204,204,220,0.65)" stroke-width="1.4" /><rect x="89.5" y="418" width="669.1" height="147.5" rx="0" fill="#112135"/><polygon points="89.5,565 89.5,562.4 94.5,562.6 99.5,562.5 104.5,562.7 109.5,562.7 114.5,562.3 119.5,562.3 124.5,562.8 129.5,562.4 134.5,562.4 139.5,562.9 144.5,562.6 149.5,562.8 154.5,562.6 159.5,562.7 164.5,562.4 169.5,562.7 174.5,562.9 179.5,562.6 184.5,562.8 189.5,562.7 194.5,562.3 199.5,562.8 204.5,562.7 209.5,562.5 214.5,562.3 219.5,562.9 224.5,562.6 229.5,562.8 234.5,562.9 239.5,562.7 244.5,562.9 249.5,562.5 254.5,562.8 259.5,562.6 264.5,562.9 269.5,562.9 274.5,562.3 279.5,562.3 284.5,562.4 289.5,562.9 294.5,562.6 299.5,562.7 304.5,562.5 309.5,562.6 314.5,562.5 317.7,562.6 322.7,559.4 327.7,562.6 334.5,562.5 339.5,562.7 344.5,562.7 351.8,562.6 357.0,546.1 362.2,562.6 369.5,562.9 374.5,562.7 379.5,562.9 384.5,562.8 389.5,562.9 394.5,562.7 399.5,562.4 404.5,562.9 409.5,562.9 414.5,562.9 419.5,562.6 424.5,562.7 429.5,562.4 434.5,562.8 439.5,562.7 444.5,562.4 449.5,562.3 454.5,562.8 459.5,562.9 464.5,562.3 469.5,562.8 474.5,562.5 479.5,562.4 484.5,562.5 489.5,562.8 494.5,562.9 499.5,562.3 504.5,562.7 509.5,562.3 514.5,562.8 519.5,562.5 524.5,562.9 529.5,562.9 534.5,562.6 539.5,562.9 544.5,562.5 549.5,562.3 554.5,562.7 559.5,562.3 564.5,562.4 569.5,562.5 574.5,562.7 579.5,562.4 584.5,562.3 589.5,562.9 594.5,562.5 599.5,562.9 604.5,562.9 609.5,562.5 614.5,562.6 619.5,562.6 624.5,562.7 629.5,562.7 634.5,562.6 639.5,562.7 644.5,562.9 649.5,562.6 654.5,562.6 659.5,562.8 664.5,562.4 669.5,562.5 674.5,562.9 679.5,562.6 684.5,562.6 689.5,562.3 694.5,562.5 701.2,562.6 706.4,545.1 711.6,562.6 714.5,562.7 719.5,562.3 724.5,562.7 729.5,562.7 734.5,562.3 739.5,562.7 744.5,562.6 749.5,562.7 754.5,562.5 758.6,562.7 758.6,565" fill="#0f2846"/><line x1="63.5" y1="418.5" x2="761.5" y2="418.5" stroke="rgba(204,204,220,0.12)" stroke-width="1" /><line x1="63.5" y1="447.5" x2="761.5" y2="447.5" stroke="rgba(204,204,220,0.12)" stroke-width="1" /><line x1="63.5" y1="477.5" x2="761.5" y2="477.5" stroke="rgba(204,204,220,0.12)" stroke-width="1" /><line x1="63.5" y1="506.5" x2="761.5" y2="506.5" stroke="rgba(204,204,220,0.12)" stroke-width="1" /><line x1="63.5" y1="536.5" x2="761.5" y2="536.5" stroke="rgba(204,204,220,0.12)" stroke-width="1" /><line x1="63.5" y1="565.5" x2="761.5" y2="565.5" stroke="rgba(204,204,220,0.12)" stroke-width="1" /><line x1="107.5" y1="418" x2="107.5" y2="569" stroke="rgba(204,204,220,0.12)" stroke-width="1" /><line x1="223.5" y1="418" x2="223.5" y2="569" stroke="rgba(204,204,220,0.12)" stroke-width="1" /><line x1="339.5" y1="418" x2="339.5" y2="569" stroke="rgba(204,204,220,0.12)" stroke-width="1" /><line x1="456.5" y1="418" x2="456.5" y2="569" stroke="rgba(204,204,220,0.12)" stroke-width="1" /><line x1="572.5" y1="418" x2="572.5" y2="569" stroke="rgba(204,204,220,0.12)" stroke-width="1" /><line x1="688.5" y1="418" x2="688.5" y2="569" stroke="rgba(204,204,220,0.12)" stroke-width="1" /><line x1="89.5" y1="418.5" x2="758.6" y2="418.5" stroke="#163a66" stroke-width="1.2" /><polyline points="89.5,562.4 94.5,562.6 99.5,562.5 104.5,562.7 109.5,562.7 114.5,562.3 119.5,562.3 124.5,562.8 129.5,562.4 134.5,562.4 139.5,562.9 144.5,562.6 149.5,562.8 154.5,562.6 159.5,562.7 164.5,562.4 169.5,562.7 174.5,562.9 179.5,562.6 184.5,562.8 189.5,562.7 194.5,562.3 199.5,562.8 204.5,562.7 209.5,562.5 214.5,562.3 219.5,562.9 224.5,562.6 229.5,562.8 234.5,562.9 239.5,562.7 244.5,562.9 249.5,562.5 254.5,562.8 259.5,562.6 264.5,562.9 269.5,562.9 274.5,562.3 279.5,562.3 284.5,562.4 289.5,562.9 294.5,562.6 299.5,562.7 304.5,562.5 309.5,562.6 314.5,562.5 317.7,562.6 322.7,559.4 327.7,562.6 334.5,562.5 339.5,562.7 344.5,562.7 351.8,562.6 357.0,546.1 362.2,562.6 369.5,562.9 374.5,562.7 379.5,562.9 384.5,562.8 389.5,562.9 394.5,562.7 399.5,562.4 404.5,562.9 409.5,562.9 414.5,562.9 419.5,562.6 424.5,562.7 429.5,562.4 434.5,562.8 439.5,562.7 444.5,562.4 449.5,562.3 454.5,562.8 459.5,562.9 464.5,562.3 469.5,562.8 474.5,562.5 479.5,562.4 484.5,562.5 489.5,562.8 494.5,562.9 499.5,562.3 504.5,562.7 509.5,562.3 514.5,562.8 519.5,562.5 524.5,562.9 529.5,562.9 534.5,562.6 539.5,562.9 544.5,562.5 549.5,562.3 554.5,562.7 559.5,562.3 564.5,562.4 569.5,562.5 574.5,562.7 579.5,562.4 584.5,562.3 589.5,562.9 594.5,562.5 599.5,562.9 604.5,562.9 609.5,562.5 614.5,562.6 619.5,562.6 624.5,562.7 629.5,562.7 634.5,562.6 639.5,562.7 644.5,562.9 649.5,562.6 654.5,562.6 659.5,562.8 664.5,562.4 669.5,562.5 674.5,562.9 679.5,562.6 684.5,562.6 689.5,562.3 694.5,562.5 701.2,562.6 706.4,545.1 711.6,562.6 714.5,562.7 719.5,562.3 724.5,562.7 729.5,562.7 734.5,562.3 739.5,562.7 744.5,562.6 749.5,562.7 754.5,562.5 758.6,562.7" fill="none" stroke="#5c2a5c" stroke-width="1.8"/><polyline points="89.5,562.4 94.5,562.6 99.5,562.5 104.5,562.7 109.5,562.7 114.5,562.3 119.5,562.3 124.5,562.8 129.5,562.4 134.5,562.4 139.5,562.9 144.5,562.6 149.5,562.8 154.5,562.6 159.5,562.7 164.5,562.4 169.5,562.7 174.5,562.9 179.5,562.6 184.5,562.8 189.5,562.7 194.5,562.3 199.5,562.8 204.5,562.7 209.5,562.5 214.5,562.3 219.5,562.9 224.5,562.6 229.5,562.8 234.5,562.9 239.5,562.7 244.5,562.9 249.5,562.5 254.5,562.8 259.5,562.6 264.5,562.9 269.5,562.9 274.5,562.3 279.5,562.3 284.5,562.4 289.5,562.9 294.5,562.6 299.5,562.7 304.5,562.5 309.5,562.6 314.5,562.5 317.7,562.6 322.7,559.4 327.7,562.6 334.5,562.5 339.5,562.7 344.5,562.7 351.8,562.6 357.0,546.1 362.2,562.6 369.5,562.9 374.5,562.7 379.5,562.9 384.5,562.8 389.5,562.9 394.5,562.7 399.5,562.4 404.5,562.9 409.5,562.9 414.5,562.9 419.5,562.6 424.5,562.7 429.5,562.4 434.5,562.8 439.5,562.7 444.5,562.4 449.5,562.3 454.5,562.8 459.5,562.9 464.5,562.3 469.5,562.8 474.5,562.5 479.5,562.4 484.5,562.5 489.5,562.8 494.5,562.9 499.5,562.3 504.5,562.7 509.5,562.3 514.5,562.8 519.5,562.5 524.5,562.9 529.5,562.9 534.5,562.6 539.5,562.9 544.5,562.5 549.5,562.3 554.5,562.7 559.5,562.3 564.5,562.4 569.5,562.5 574.5,562.7 579.5,562.4 584.5,562.3 589.5,562.9 594.5,562.5 599.5,562.9 604.5,562.9 609.5,562.5 614.5,562.6 619.5,562.6 624.5,562.7 629.5,562.7 634.5,562.6 639.5,562.7 644.5,562.9 649.5,562.6 654.5,562.6 659.5,562.8 664.5,562.4 669.5,562.5 674.5,562.9 679.5,562.6 684.5,562.6 689.5,562.3 694.5,562.5 701.2,562.6 706.4,545.1 711.6,562.6 714.5,562.7 719.5,562.3 724.5,562.7 729.5,562.7 734.5,562.3 739.5,562.7 744.5,562.6 749.5,562.7 754.5,562.5 758.6,562.7" fill="none" stroke="#a8322a" stroke-width="1.1" stroke-dasharray="2.5,2.5"/><polygon points="89.5,565.5 89.5,565.2 94.5,565.2 99.5,565.2 104.5,565.2 109.5,565.2 114.5,565.2 119.5,565.2 124.5,565.2 129.5,565.2 134.5,565.2 139.5,565.2 144.5,565.2 149.5,565.2 154.5,565.2 159.5,565.2 164.5,565.2 169.5,565.2 174.5,565.2 179.5,565.2 184.5,565.2 189.5,565.2 194.5,565.2 199.5,565.2 204.5,565.2 209.5,565.2 214.5,565.2 219.5,565.2 224.5,565.2 229.5,565.2 234.5,565.2 239.5,565.2 244.5,565.2 249.5,565.2 254.5,565.2 259.5,565.2 264.5,565.2 269.5,565.2 274.5,565.2 279.5,565.2 284.5,565.2 289.5,565.2 294.5,565.2 299.5,565.2 304.5,565.2 309.5,565.2 314.5,565.2 318.7,565.2 322.7,563.7 326.7,565.2 329.5,565.2 334.5,565.2 339.5,565.2 344.5,565.2 352.0,565.2 357.0,562.2 362.0,565.2 369.5,565.2 374.5,565.2 379.5,565.2 384.5,565.2 389.5,565.2 394.5,565.2 399.5,565.2 404.5,565.2 409.5,565.2 414.5,565.2 419.5,565.2 424.5,565.2 429.5,565.2 434.5,565.2 439.5,565.2 444.5,565.2 449.5,565.2 454.5,565.2 459.5,565.2 464.5,565.2 469.5,565.2 474.5,565.2 479.5,565.2 484.5,565.2 489.5,565.2 494.5,565.2 499.5,565.2 504.5,565.2 509.5,565.2 514.5,565.2 519.5,565.2 524.5,565.2 529.5,565.2 534.5,565.2 539.5,565.2 544.5,565.2 549.5,565.2 554.5,565.2 559.5,565.2 564.5,565.2 569.5,565.2 574.5,565.2 579.5,565.2 584.5,565.2 589.5,565.2 594.5,565.2 599.5,565.2 604.5,565.2 609.5,565.2 614.5,565.2 619.5,565.2 624.5,565.2 629.5,565.2 634.5,565.2 639.5,565.2 644.5,565.2 649.5,565.2 654.5,565.2 659.5,565.2 664.5,565.2 669.5,565.2 674.5,565.2 679.5,565.2 684.5,565.2 689.5,565.2 694.5,565.2 701.4,565.2 706.4,562.2 711.4,565.2 714.5,565.2 719.5,565.2 724.5,565.2 729.5,565.2 734.5,565.2 739.5,565.2 744.5,565.2 749.5,565.2 754.5,565.2 758.6,565.2 758.6,565.5" fill="#4a4020"/><polyline points="89.5,565.2 94.5,565.2 99.5,565.2 104.5,565.2 109.5,565.2 114.5,565.2 119.5,565.2 124.5,565.2 129.5,565.2 134.5,565.2 139.5,565.2 144.5,565.2 149.5,565.2 154.5,565.2 159.5,565.2 164.5,565.2 169.5,565.2 174.5,565.2 179.5,565.2 184.5,565.2 189.5,565.2 194.5,565.2 199.5,565.2 204.5,565.2 209.5,565.2 214.5,565.2 219.5,565.2 224.5,565.2 229.5,565.2 234.5,565.2 239.5,565.2 244.5,565.2 249.5,565.2 254.5,565.2 259.5,565.2 264.5,565.2 269.5,565.2 274.5,565.2 279.5,565.2 284.5,565.2 289.5,565.2 294.5,565.2 299.5,565.2 304.5,565.2 309.5,565.2 314.5,565.2 318.7,565.2 322.7,563.7 326.7,565.2 329.5,565.2 334.5,565.2 339.5,565.2 344.5,565.2 352.0,565.2 357.0,562.2 362.0,565.2 369.5,565.2 374.5,565.2 379.5,565.2 384.5,565.2 389.5,565.2 394.5,565.2 399.5,565.2 404.5,565.2 409.5,565.2 414.5,565.2 419.5,565.2 424.5,565.2 429.5,565.2 434.5,565.2 439.5,565.2 444.5,565.2 449.5,565.2 454.5,565.2 459.5,565.2 464.5,565.2 469.5,565.2 474.5,565.2 479.5,565.2 484.5,565.2 489.5,565.2 494.5,565.2 499.5,565.2 504.5,565.2 509.5,565.2 514.5,565.2 519.5,565.2 524.5,565.2 529.5,565.2 534.5,565.2 539.5,565.2 544.5,565.2 549.5,565.2 554.5,565.2 559.5,565.2 564.5,565.2 569.5,565.2 574.5,565.2 579.5,565.2 584.5,565.2 589.5,565.2 594.5,565.2 599.5,565.2 604.5,565.2 609.5,565.2 614.5,565.2 619.5,565.2 624.5,565.2 629.5,565.2 634.5,565.2 639.5,565.2 644.5,565.2 649.5,565.2 654.5,565.2 659.5,565.2 664.5,565.2 669.5,565.2 674.5,565.2 679.5,565.2 684.5,565.2 689.5,565.2 694.5,565.2 701.4,565.2 706.4,562.2 711.4,565.2 714.5,565.2 719.5,565.2 724.5,565.2 729.5,565.2 734.5,565.2 739.5,565.2 744.5,565.2 749.5,565.2 754.5,565.2 758.6,565.2" fill="none" stroke="#d8ac35" stroke-width="1.5"/><text x="57" y="422.1" font-size="12" fill="#c7c7d1" font-weight="400" text-anchor="end" letter-spacing="0.15" >100%</text><text x="57" y="451.1" font-size="12" fill="#c7c7d1" font-weight="400" text-anchor="end" letter-spacing="0.15" >80%</text><text x="57" y="481.1" font-size="12" fill="#c7c7d1" font-weight="400" text-anchor="end" letter-spacing="0.15" >60%</text><text x="57" y="510.1" font-size="12" fill="#c7c7d1" font-weight="400" text-anchor="end" letter-spacing="0.15" >40%</text><text x="57" y="540.1" font-size="12" fill="#c7c7d1" font-weight="400" text-anchor="end" letter-spacing="0.15" >20%</text><text x="57" y="569.1" font-size="12" fill="#c7c7d1" font-weight="400" text-anchor="end" letter-spacing="0.15" >0%</text><text x="107.5" y="583.8" font-size="12" fill="#c7c7d1" font-weight="400" text-anchor="middle" letter-spacing="0.2" >10:30</text><text x="223.5" y="583.8" font-size="12" fill="#c7c7d1" font-weight="400" text-anchor="middle" letter-spacing="0.2" >10:35</text><text x="339.5" y="583.8" font-size="12" fill="#c7c7d1" font-weight="400" text-anchor="middle" letter-spacing="0.2" >10:40</text><text x="456.5" y="583.8" font-size="12" fill="#c7c7d1" font-weight="400" text-anchor="middle" letter-spacing="0.2" >10:45</text><text x="572.5" y="583.8" font-size="12" fill="#c7c7d1" font-weight="400" text-anchor="middle" letter-spacing="0.2" >10:50</text><text x="688.5" y="583.8" font-size="12" fill="#c7c7d1" font-weight="400" text-anchor="middle" letter-spacing="0.2" >10:55</text><rect x="26.2" y="603.1" width="13.5" height="3.6" rx="1.8" fill="#eab839"/><text x="47.800000000000004" y="609.1" font-size="12" fill="#ccccdc" font-weight="400" text-anchor="start" textLength="74.8" lengthAdjust="spacing" >Busy System</text><rect x="133.2" y="603.1" width="13.5" height="3.6" rx="1.8" fill="#1858a8"/><text x="154.39999999999998" y="609.1" font-size="12" fill="#ccccdc" font-weight="400" text-anchor="start" textLength="59.5" lengthAdjust="spacing" >Busy User</text><rect x="224.4" y="603.1" width="13.5" height="3.6" rx="1.8" fill="#8a1a10"/><text x="245.79999999999998" y="609.1" font-size="12" fill="#ccccdc" font-weight="400" text-anchor="start" textLength="67" lengthAdjust="spacing" >Busy Iowait</text><rect x="323.2" y="603.1" width="13.5" height="3.6" rx="1.8" fill="#ff9830"/><text x="344.2" y="609.1" font-size="12" fill="#ccccdc" font-weight="400" text-anchor="start" textLength="59.7" lengthAdjust="spacing" >Busy IRQs</text><rect x="414" y="603.1" width="13.5" height="3.6" rx="1.8" fill="#7a2a7a"/><text x="435.4" y="609.1" font-size="12" fill="#ccccdc" font-weight="400" text-anchor="start" textLength="64.7" lengthAdjust="spacing" >Busy Other</text><rect x="510.2" y="603.1" width="13.5" height="3.6" rx="1.8" fill="#0a3560"/><text x="531.6" y="609.1" font-size="12" fill="#ccccdc" font-weight="400" text-anchor="start" textLength="21.6" lengthAdjust="spacing" >Idle</text><rect x="786.5" y="369.5" width="764.0" height="257.0" rx="6" fill="#181b1f" stroke="#2e3035" stroke-width="1"/><text x="794.8000000000001" y="391.5" font-size="14" fill="#ccccdc" font-weight="400" text-anchor="start" textLength="97.7" lengthAdjust="spacing" stroke="#ccccdc" stroke-width="0.3" >Memory Basic</text><line x1="1540.0" y1="625.0" x2="1549.0" y2="616.0" stroke="rgba(204,204,220,0.3)" stroke-width="1.2" /><line x1="1545.0" y1="625.0" x2="1549.0" y2="621.0" stroke="rgba(204,204,220,0.3)" stroke-width="1.2" /><circle cx="915.6" cy="386.5" r="6.2" stroke="rgba(204,204,220,0.65)" stroke-width="1.3" fill="none"/><line x1="915.6" y1="386.0" x2="915.6" y2="389.5" stroke="rgba(204,204,220,0.65)" stroke-width="1.4" /><line x1="915.6" y1="383.3" x2="915.6" y2="384.3" stroke="rgba(204,204,220,0.65)" stroke-width="1.4" /><rect x="873.6" y="434.5" width="658.1999999999999" height="110.2" rx="0" fill="#405a40"/><rect x="873.6" y="544.7" width="658.1999999999999" height="10" rx="0" fill="#112236"/><polygon points="873.6,554.5 874.0,554.5 876.0,554.5 878.0,554.5 880.0,554.5 882.0,554.5 884.0,554.5 886.0,554.5 888.0,554.5 890.0,554.5 892.0,554.5 894.0,554.5 896.0,554.5 898.0,554.5 900.0,554.5 902.0,554.5 904.0,554.5 906.0,554.5 908.0,554.5 910.0,554.5 912.0,554.5 914.0,554.5 916.0,554.5 918.0,554.5 920.0,554.5 922.0,554.5 924.0,554.5 926.0,554.5 928.0,554.5 930.0,554.5 932.0,554.5 934.0,554.5 936.0,554.5 938.0,554.5 940.0,554.5 942.0,554.5 944.0,554.5 946.0,554.5 948.0,554.5 950.0,554.5 952.0,554.5 954.0,554.5 956.0,554.5 958.0,554.5 960.0,554.5 962.0,554.5 964.0,554.5 966.0,554.5 968.0,554.5 970.0,554.5 972.0,554.5 974.0,554.5 976.0,554.5 978.0,554.5 980.0,554.5 982.0,554.5 984.0,554.5 986.0,554.5 988.0,554.5 990.0,554.5 992.0,554.5 994.0,554.5 996.0,554.5 998.0,554.5 1000.0,554.5 1002.0,554.5 1004.0,554.5 1006.0,554.5 1008.0,554.5 1010.0,554.5 1012.0,554.5 1014.0,554.5 1016.0,554.5 1018.0,554.5 1020.0,554.5 1022.0,554.5 1024.0,554.5 1026.0,554.5 1028.0,554.5 1030.0,554.5 1032.0,554.5 1034.0,554.5 1036.0,554.5 1038.0,554.5 1040.0,554.5 1042.0,554.5 1044.0,554.5 1046.0,554.5 1048.0,554.5 1050.0,554.5 1052.0,554.5 1054.0,554.5 1056.0,554.5 1058.0,554.5 1060.0,554.5 1062.0,554.5 1064.0,554.5 1066.0,554.5 1068.0,554.5 1070.0,554.5 1072.0,554.5 1074.0,554.5 1076.0,554.5 1078.0,554.5 1080.0,554.5 1082.0,554.5 1084.0,554.5 1086.0,554.5 1088.0,554.5 1090.0,554.5 1092.0,554.5 1094.0,554.5 1096.0,554.5 1098.0,554.5 1100.0,554.5 1102.0,555.5 1104.0,555.5 1106.0,555.5 1108.0,555.5 1110.0,555.5 1112.0,555.5 1114.0,555.5 1116.0,554.5 1118.0,554.5 1120.0,554.5 1122.0,554.5 1124.0,554.5 1126.0,554.5 1128.0,554.5 1130.0,554.5 1132.0,554.5 1134.0,554.5 1136.0,554.5 1138.0,555.5 1140.0,555.5 1142.0,555.5 1144.0,555.5 1146.0,555.5 1148.0,555.5 1150.0,555.5 1152.0,555.5 1154.0,555.5 1156.0,555.5 1158.0,554.5 1160.0,554.5 1162.0,554.5 1164.0,554.5 1166.0,554.5 1168.0,554.5 1170.0,554.5 1172.0,554.5 1174.0,554.5 1176.0,554.5 1178.0,554.5 1180.0,554.5 1182.0,554.5 1184.0,554.5 1186.0,554.5 1188.0,554.5 1190.0,554.5 1192.0,554.5 1194.0,554.5 1196.0,554.5 1198.0,554.5 1200.0,554.5 1202.0,554.5 1204.0,554.5 1206.0,554.5 1208.0,554.5 1210.0,554.5 1212.0,554.5 1214.0,554.5 1216.0,554.5 1218.0,554.5 1220.0,554.5 1222.0,554.5 1224.0,554.5 1226.0,554.5 1228.0,554.5 1230.0,554.5 1232.0,554.5 1234.0,554.5 1236.0,554.5 1238.0,554.5 1240.0,554.5 1242.0,554.5 1244.0,554.5 1246.0,554.5 1248.0,554.5 1250.0,554.5 1252.0,554.5 1254.0,554.5 1256.0,554.5 1258.0,554.5 1260.0,554.5 1262.0,554.5 1264.0,554.5 1266.0,554.5 1268.0,554.5 1270.0,554.5 1272.0,554.5 1274.0,554.5 1276.0,554.5 1278.0,554.5 1280.0,554.5 1282.0,554.5 1284.0,554.5 1286.0,554.5 1288.0,554.5 1290.0,554.5 1292.0,554.5 1294.0,554.5 1296.0,554.5 1298.0,554.5 1300.0,554.5 1302.0,554.5 1304.0,554.5 1306.0,554.5 1308.0,554.5 1310.0,554.5 1312.0,554.5 1314.0,554.5 1316.0,554.5 1318.0,554.5 1320.0,554.5 1322.0,554.5 1324.0,554.5 1326.0,554.5 1328.0,554.5 1330.0,554.5 1332.0,554.5 1334.0,554.5 1336.0,555.6 1338.0,555.6 1340.0,555.6 1342.0,555.6 1344.0,555.6 1346.0,555.6 1348.0,555.6 1350.0,555.6 1352.0,555.6 1354.0,555.6 1356.0,555.6 1358.0,555.6 1360.0,555.6 1362.0,555.6 1364.0,555.6 1366.0,555.6 1368.0,555.6 1370.0,555.6 1372.0,555.6 1374.0,555.6 1376.0,555.6 1378.0,555.6 1380.0,555.6 1382.0,555.6 1384.0,555.6 1386.0,555.6 1388.0,555.6 1390.0,555.6 1392.0,555.6 1394.0,555.6 1396.0,555.6 1398.0,555.6 1400.0,555.6 1402.0,555.6 1404.0,555.6 1406.0,555.6 1408.0,555.6 1410.0,555.6 1412.0,555.6 1414.0,555.6 1416.0,555.6 1418.0,555.6 1420.0,555.6 1422.0,555.6 1424.0,555.6 1426.0,555.6 1428.0,555.6 1430.0,555.6 1432.0,555.6 1434.0,555.6 1436.0,555.6 1438.0,555.6 1440.0,555.6 1442.0,555.6 1444.0,555.6 1446.0,555.6 1448.0,555.6 1450.0,555.6 1452.0,555.6 1454.0,555.6 1456.0,555.6 1458.0,555.6 1460.0,555.6 1462.0,555.6 1464.0,555.6 1466.0,555.6 1468.0,555.6 1470.0,555.6 1472.0,555.6 1474.0,555.6 1476.0,555.6 1478.0,555.6 1480.0,555.6 1482.0,554.5 1484.0,554.5 1486.0,554.5 1488.0,554.5 1490.0,554.5 1492.0,554.5 1494.0,554.5 1496.0,554.5 1498.0,554.5 1500.0,554.5 1502.0,554.5 1504.0,554.5 1506.0,554.5 1508.0,554.5 1510.0,554.5 1512.0,554.5 1514.0,554.5 1516.0,554.5 1518.0,554.5 1520.0,554.5 1522.0,554.5 1524.0,554.5 1526.0,554.5 1528.0,554.5 1530.0,554.5 1531.8,554.5 1531.8,565.5 873.6,565.5" fill="#72611f"/><line x1="852.8" y1="418.5" x2="1534.2" y2="418.5" stroke="rgba(204,204,220,0.12)" stroke-width="1" /><line x1="852.8" y1="437.5" x2="1534.2" y2="437.5" stroke="rgba(204,204,220,0.12)" stroke-width="1" /><line x1="852.8" y1="455.5" x2="1534.2" y2="455.5" stroke="rgba(204,204,220,0.12)" stroke-width="1" /><line x1="852.8" y1="473.5" x2="1534.2" y2="473.5" stroke="rgba(204,204,220,0.12)" stroke-width="1" /><line x1="852.8" y1="492.5" x2="1534.2" y2="492.5" stroke="rgba(204,204,220,0.12)" stroke-width="1" /><line x1="852.8" y1="510.5" x2="1534.2" y2="510.5" stroke="rgba(204,204,220,0.12)" stroke-width="1" /><line x1="852.8" y1="528.5" x2="1534.2" y2="528.5" stroke="rgba(204,204,220,0.12)" stroke-width="1" /><line x1="852.8" y1="547.5" x2="1534.2" y2="547.5" stroke="rgba(204,204,220,0.12)" stroke-width="1" /><line x1="852.8" y1="565.5" x2="1534.2" y2="565.5" stroke="rgba(204,204,220,0.12)" stroke-width="1" /><line x1="896.5" y1="418" x2="896.5" y2="569" stroke="rgba(204,204,220,0.12)" stroke-width="1" /><line x1="1009.5" y1="418" x2="1009.5" y2="569" stroke="rgba(204,204,220,0.12)" stroke-width="1" /><line x1="1123.5" y1="418" x2="1123.5" y2="569" stroke="rgba(204,204,220,0.12)" stroke-width="1" /><line x1="1236.5" y1="418" x2="1236.5" y2="569" stroke="rgba(204,204,220,0.12)" stroke-width="1" /><line x1="1350.5" y1="418" x2="1350.5" y2="569" stroke="rgba(204,204,220,0.12)" stroke-width="1" /><line x1="1463.5" y1="418" x2="1463.5" y2="569" stroke="rgba(204,204,220,0.12)" stroke-width="1" /><polyline points="873.6,554.5 874.0,554.5 876.0,554.5 878.0,554.5 880.0,554.5 882.0,554.5 884.0,554.5 886.0,554.5 888.0,554.5 890.0,554.5 892.0,554.5 894.0,554.5 896.0,554.5 898.0,554.5 900.0,554.5 902.0,554.5 904.0,554.5 906.0,554.5 908.0,554.5 910.0,554.5 912.0,554.5 914.0,554.5 916.0,554.5 918.0,554.5 920.0,554.5 922.0,554.5 924.0,554.5 926.0,554.5 928.0,554.5 930.0,554.5 932.0,554.5 934.0,554.5 936.0,554.5 938.0,554.5 940.0,554.5 942.0,554.5 944.0,554.5 946.0,554.5 948.0,554.5 950.0,554.5 952.0,554.5 954.0,554.5 956.0,554.5 958.0,554.5 960.0,554.5 962.0,554.5 964.0,554.5 966.0,554.5 968.0,554.5 970.0,554.5 972.0,554.5 974.0,554.5 976.0,554.5 978.0,554.5 980.0,554.5 982.0,554.5 984.0,554.5 986.0,554.5 988.0,554.5 990.0,554.5 992.0,554.5 994.0,554.5 996.0,554.5 998.0,554.5 1000.0,554.5 1002.0,554.5 1004.0,554.5 1006.0,554.5 1008.0,554.5 1010.0,554.5 1012.0,554.5 1014.0,554.5 1016.0,554.5 1018.0,554.5 1020.0,554.5 1022.0,554.5 1024.0,554.5 1026.0,554.5 1028.0,554.5 1030.0,554.5 1032.0,554.5 1034.0,554.5 1036.0,554.5 1038.0,554.5 1040.0,554.5 1042.0,554.5 1044.0,554.5 1046.0,554.5 1048.0,554.5 1050.0,554.5 1052.0,554.5 1054.0,554.5 1056.0,554.5 1058.0,554.5 1060.0,554.5 1062.0,554.5 1064.0,554.5 1066.0,554.5 1068.0,554.5 1070.0,554.5 1072.0,554.5 1074.0,554.5 1076.0,554.5 1078.0,554.5 1080.0,554.5 1082.0,554.5 1084.0,554.5 1086.0,554.5 1088.0,554.5 1090.0,554.5 1092.0,554.5 1094.0,554.5 1096.0,554.5 1098.0,554.5 1100.0,554.5 1102.0,555.5 1104.0,555.5 1106.0,555.5 1108.0,555.5 1110.0,555.5 1112.0,555.5 1114.0,555.5 1116.0,554.5 1118.0,554.5 1120.0,554.5 1122.0,554.5 1124.0,554.5 1126.0,554.5 1128.0,554.5 1130.0,554.5 1132.0,554.5 1134.0,554.5 1136.0,554.5 1138.0,555.5 1140.0,555.5 1142.0,555.5 1144.0,555.5 1146.0,555.5 1148.0,555.5 1150.0,555.5 1152.0,555.5 1154.0,555.5 1156.0,555.5 1158.0,554.5 1160.0,554.5 1162.0,554.5 1164.0,554.5 1166.0,554.5 1168.0,554.5 1170.0,554.5 1172.0,554.5 1174.0,554.5 1176.0,554.5 1178.0,554.5 1180.0,554.5 1182.0,554.5 1184.0,554.5 1186.0,554.5 1188.0,554.5 1190.0,554.5 1192.0,554.5 1194.0,554.5 1196.0,554.5 1198.0,554.5 1200.0,554.5 1202.0,554.5 1204.0,554.5 1206.0,554.5 1208.0,554.5 1210.0,554.5 1212.0,554.5 1214.0,554.5 1216.0,554.5 1218.0,554.5 1220.0,554.5 1222.0,554.5 1224.0,554.5 1226.0,554.5 1228.0,554.5 1230.0,554.5 1232.0,554.5 1234.0,554.5 1236.0,554.5 1238.0,554.5 1240.0,554.5 1242.0,554.5 1244.0,554.5 1246.0,554.5 1248.0,554.5 1250.0,554.5 1252.0,554.5 1254.0,554.5 1256.0,554.5 1258.0,554.5 1260.0,554.5 1262.0,554.5 1264.0,554.5 1266.0,554.5 1268.0,554.5 1270.0,554.5 1272.0,554.5 1274.0,554.5 1276.0,554.5 1278.0,554.5 1280.0,554.5 1282.0,554.5 1284.0,554.5 1286.0,554.5 1288.0,554.5 1290.0,554.5 1292.0,554.5 1294.0,554.5 1296.0,554.5 1298.0,554.5 1300.0,554.5 1302.0,554.5 1304.0,554.5 1306.0,554.5 1308.0,554.5 1310.0,554.5 1312.0,554.5 1314.0,554.5 1316.0,554.5 1318.0,554.5 1320.0,554.5 1322.0,554.5 1324.0,554.5 1326.0,554.5 1328.0,554.5 1330.0,554.5 1332.0,554.5 1334.0,554.5 1336.0,555.6 1338.0,555.6 1340.0,555.6 1342.0,555.6 1344.0,555.6 1346.0,555.6 1348.0,555.6 1350.0,555.6 1352.0,555.6 1354.0,555.6 1356.0,555.6 1358.0,555.6 1360.0,555.6 1362.0,555.6 1364.0,555.6 1366.0,555.6 1368.0,555.6 1370.0,555.6 1372.0,555.6 1374.0,555.6 1376.0,555.6 1378.0,555.6 1380.0,555.6 1382.0,555.6 1384.0,555.6 1386.0,555.6 1388.0,555.6 1390.0,555.6 1392.0,555.6 1394.0,555.6 1396.0,555.6 1398.0,555.6 1400.0,555.6 1402.0,555.6 1404.0,555.6 1406.0,555.6 1408.0,555.6 1410.0,555.6 1412.0,555.6 1414.0,555.6 1416.0,555.6 1418.0,555.6 1420.0,555.6 1422.0,555.6 1424.0,555.6 1426.0,555.6 1428.0,555.6 1430.0,555.6 1432.0,555.6 1434.0,555.6 1436.0,555.6 1438.0,555.6 1440.0,555.6 1442.0,555.6 1444.0,555.6 1446.0,555.6 1448.0,555.6 1450.0,555.6 1452.0,555.6 1454.0,555.6 1456.0,555.6 1458.0,555.6 1460.0,555.6 1462.0,555.6 1464.0,555.6 1466.0,555.6 1468.0,555.6 1470.0,555.6 1472.0,555.6 1474.0,555.6 1476.0,555.6 1478.0,555.6 1480.0,555.6 1482.0,554.5 1484.0,554.5 1486.0,554.5 1488.0,554.5 1490.0,554.5 1492.0,554.5 1494.0,554.5 1496.0,554.5 1498.0,554.5 1500.0,554.5 1502.0,554.5 1504.0,554.5 1506.0,554.5 1508.0,554.5 1510.0,554.5 1512.0,554.5 1514.0,554.5 1516.0,554.5 1518.0,554.5 1520.0,554.5 1522.0,554.5 1524.0,554.5 1526.0,554.5 1528.0,554.5 1530.0,554.5 1531.8,554.5" fill="none" stroke="#d8b010" stroke-width="1.5"/><line x1="873.6" y1="544.7" x2="1531.8" y2="544.7" stroke="#2a5d70" stroke-width="1" /><line x1="873.6" y1="434.5" x2="1531.8" y2="434.5" stroke="#c8261a" stroke-width="1.2" /><text x="848" y="422.1" font-size="12" fill="#c7c7d1" font-weight="400" text-anchor="end" letter-spacing="0.15" >4 GiB</text><text x="848" y="441.1" font-size="12" fill="#c7c7d1" font-weight="400" text-anchor="end" letter-spacing="0.15" >3.50 GiB</text><text x="848" y="459.1" font-size="12" fill="#c7c7d1" font-weight="400" text-anchor="end" letter-spacing="0.15" >3 GiB</text><text x="848" y="477.1" font-size="12" fill="#c7c7d1" font-weight="400" text-anchor="end" letter-spacing="0.15" >2.50 GiB</text><text x="848" y="496.1" font-size="12" fill="#c7c7d1" font-weight="400" text-anchor="end" letter-spacing="0.15" >2 GiB</text><text x="848" y="514.1" font-size="12" fill="#c7c7d1" font-weight="400" text-anchor="end" letter-spacing="0.15" >1.50 GiB</text><text x="848" y="532.1" font-size="12" fill="#c7c7d1" font-weight="400" text-anchor="end" letter-spacing="0.15" >1 GiB</text><text x="848" y="551.1" font-size="12" fill="#c7c7d1" font-weight="400" text-anchor="end" letter-spacing="0.15" >512 MiB</text><text x="848" y="569.1" font-size="12" fill="#c7c7d1" font-weight="400" text-anchor="end" letter-spacing="0.15" >0 B</text><text x="896.5" y="583.8" font-size="12" fill="#c7c7d1" font-weight="400" text-anchor="middle" letter-spacing="0.2" >10:30</text><text x="1009.5" y="583.8" font-size="12" fill="#c7c7d1" font-weight="400" text-anchor="middle" letter-spacing="0.2" >10:35</text><text x="1123.5" y="583.8" font-size="12" fill="#c7c7d1" font-weight="400" text-anchor="middle" letter-spacing="0.2" >10:40</text><text x="1236.5" y="583.8" font-size="12" fill="#c7c7d1" font-weight="400" text-anchor="middle" letter-spacing="0.2" >10:45</text><text x="1350.5" y="583.8" font-size="12" fill="#c7c7d1" font-weight="400" text-anchor="middle" letter-spacing="0.2" >10:50</text><text x="1463.5" y="583.8" font-size="12" fill="#c7c7d1" font-weight="400" text-anchor="middle" letter-spacing="0.2" >10:55</text><rect x="799.3" y="603.1" width="13.5" height="3.6" rx="1.8" fill="#e8f5e0"/><text x="820.5" y="609.1" font-size="12" fill="#ccccdc" font-weight="400" text-anchor="start" textLength="29.2" lengthAdjust="spacing" >Total</text><rect x="859.2" y="603.1" width="13.5" height="3.6" rx="1.8" fill="#fade2a"/><text x="880.5" y="609.1" font-size="12" fill="#ccccdc" font-weight="400" text-anchor="start" textLength="30.8" lengthAdjust="spacing" >Used</text><rect x="921.4" y="603.1" width="13.5" height="3.6" rx="1.8" fill="#0a3560"/><text x="942.9000000000001" y="609.1" font-size="12" fill="#ccccdc" font-weight="400" text-anchor="start" textLength="88.3" lengthAdjust="spacing" >Cache + Buffer</text><rect x="1041.3" y="603.1" width="13.5" height="3.6" rx="1.8" fill="#7ab86a"/><text x="1062.5" y="609.1" font-size="12" fill="#ccccdc" font-weight="400" text-anchor="start" textLength="25.7" lengthAdjust="spacing" >Free</text><rect x="1099.2" y="603.1" width="13.5" height="3.6" rx="1.8" fill="#c4162a"/><text x="1120.1000000000001" y="609.1" font-size="12" fill="#ccccdc" font-weight="400" text-anchor="start" textLength="64.3" lengthAdjust="spacing" >Swap used</text><rect x="13.5" y="635.5" width="764.0" height="257.0" rx="6" fill="#181b1f" stroke="#2e3035" stroke-width="1"/><text x="21.8" y="657.5" font-size="14" fill="#ccccdc" font-weight="400" text-anchor="start" textLength="147.5" lengthAdjust="spacing" stroke="#ccccdc" stroke-width="0.3" >Network Traffic Basic</text><line x1="767.0" y1="891.0" x2="776.0" y2="882.0" stroke="rgba(204,204,220,0.3)" stroke-width="1.2" /><line x1="772.0" y1="891.0" x2="776.0" y2="887.0" stroke="rgba(204,204,220,0.3)" stroke-width="1.2" /><circle cx="193" cy="652.5" r="6.2" stroke="rgba(204,204,220,0.65)" stroke-width="1.3" fill="none"/><line x1="193" y1="652.0" x2="193" y2="655.5" stroke="rgba(204,204,220,0.65)" stroke-width="1.4" /><line x1="193" y1="649.3" x2="193" y2="650.3" stroke="rgba(204,204,220,0.65)" stroke-width="1.4" /><polygon points="103.2,709.8 114.0,705.3 118.0,705.3 123.0,705.3 128.0,705.4 133.0,706.3 138.0,705.4 143.0,705.1 148.0,705.1 153.0,705.4 158.0,706.3 163.0,705.6 168.0,705.4 173.0,706.3 178.0,706.3 183.0,705.0 188.0,706.3 193.0,706.3 198.0,706.3 203.0,705.3 208.0,705.3 213.0,705.3 218.0,705.3 223.0,706.3 228.0,705.6 233.0,705.4 238.0,705.1 243.0,706.3 248.0,706.3 253.0,705.2 258.0,705.2 263.0,705.5 268.0,706.3 273.0,706.3 278.0,705.3 283.0,705.2 288.0,706.3 293.0,705.5 298.0,706.3 303.0,706.3 308.0,705.6 313.0,705.1 318.0,706.3 323.0,706.3 328.0,706.3 333.0,705.1 338.0,705.3 343.0,706.3 348.0,705.1 353.0,705.1 358.0,705.1 363.0,706.3 368.0,705.5 373.0,705.5 378.0,706.3 383.0,705.5 388.0,705.1 393.0,705.1 398.0,706.3 403.0,705.2 408.0,706.3 413.0,706.3 418.0,706.3 423.0,705.1 428.0,705.2 433.0,705.6 438.0,705.3 443.0,705.1 448.0,706.3 453.0,705.5 458.0,706.3 463.0,706.3 468.0,705.6 473.0,706.3 478.0,705.5 483.0,705.3 488.0,706.3 493.0,706.3 498.0,705.1 503.0,705.2 508.0,705.4 513.0,706.3 518.0,706.3 523.0,705.0 528.0,706.3 533.0,705.5 538.0,705.2 543.0,705.1 548.0,706.3 553.0,706.3 558.0,705.0 563.0,706.3 568.0,705.3 573.0,706.3 578.0,705.5 583.0,705.4 588.0,705.4 593.0,706.3 598.0,706.3 603.0,706.3 608.0,705.4 613.0,705.0 618.0,705.3 623.0,705.2 628.0,705.0 633.0,705.4 638.0,705.4 643.0,705.5 648.0,705.2 653.0,705.5 658.0,705.3 663.0,705.5 668.0,705.4 673.0,705.3 678.0,705.0 683.0,705.6 688.0,705.4 693.0,705.4 698.0,705.3 703.0,705.1 708.0,705.0 713.0,705.3 718.0,706.3 723.0,705.3 728.0,705.6 733.0,706.3 738.0,706.3 743.0,705.4 748.0,706.3 753.0,706.3 758.0,705.4 758.4,704.8 758.4,716 103.2,716" fill="#3d5a3e"/><polygon points="103.2,716 758.4,716 758.4,810.4 754.0,810.4 749.0,810.4 744.0,810.4 739.0,810.4 734.0,810.4 729.0,810.4 724.0,810.4 719.0,811.3 714.0,810.4 709.0,811.3 704.0,810.4 699.0,810.4 694.0,810.4 689.0,810.4 684.0,811.3 679.0,810.4 674.0,810.4 669.0,811.3 664.0,810.4 659.0,811.3 654.0,810.4 649.0,810.4 644.0,810.4 639.0,810.4 634.0,810.4 629.0,810.4 624.0,810.4 619.0,810.4 614.0,811.3 609.0,811.3 604.0,810.4 599.0,810.4 594.0,811.3 589.0,811.3 584.0,811.3 579.0,810.4 574.0,810.4 569.0,810.4 564.0,810.4 559.0,810.4 554.0,810.4 549.0,810.4 544.0,810.4 539.0,811.3 534.0,810.4 529.0,811.3 524.0,810.4 519.0,810.4 514.0,810.4 509.0,811.3 504.0,810.4 499.0,810.4 494.0,810.4 489.0,810.4 484.0,810.4 479.0,810.4 474.0,810.4 469.0,811.3 464.0,810.4 459.0,811.3 454.0,811.3 449.0,811.3 444.0,810.4 439.0,810.4 434.0,810.4 429.0,811.3 424.0,810.4 419.0,810.4 414.0,811.3 409.0,810.4 404.0,811.3 399.0,810.4 394.0,810.4 389.0,810.4 384.0,810.4 379.0,810.4 374.0,810.4 369.0,810.4 364.0,810.4 359.0,811.3 354.0,810.4 349.0,810.4 344.0,811.3 339.0,811.3 334.0,811.3 329.0,810.4 324.0,810.4 319.0,810.4 314.0,810.4 309.0,810.4 304.0,810.4 299.0,810.4 294.0,810.4 289.0,810.4 284.0,810.4 279.0,810.4 274.0,810.4 269.0,810.4 264.0,810.4 259.0,810.4 254.0,810.4 249.0,811.3 244.0,811.3 239.0,810.4 234.0,811.3 229.0,810.4 224.0,811.3 219.0,810.4 214.0,810.4 209.0,810.4 204.0,810.4 199.0,811.3 194.0,810.4 189.0,810.4 184.0,810.4 179.0,810.4 174.0,811.3 169.0,810.4 164.0,810.4 159.0,810.4 154.0,810.4 149.0,811.3 144.0,810.4 139.0,810.4 134.0,810.4 129.0,810.4 124.0,810.4 119.0,810.4 114.4,810.4 107.6,791.0 105.0,781.0 103.2,769.8" fill="#72611f"/><line x1="77" y1="694.5" x2="761.3" y2="694.5" stroke="rgba(204,204,220,0.12)" stroke-width="1" /><line x1="77" y1="716.5" x2="761.3" y2="716.5" stroke="rgba(204,204,220,0.12)" stroke-width="1" /><line x1="77" y1="736.5" x2="761.3" y2="736.5" stroke="rgba(204,204,220,0.12)" stroke-width="1" /><line x1="77" y1="758.5" x2="761.3" y2="758.5" stroke="rgba(204,204,220,0.12)" stroke-width="1" /><line x1="77" y1="778.5" x2="761.3" y2="778.5" stroke="rgba(204,204,220,0.12)" stroke-width="1" /><line x1="77" y1="800.5" x2="761.3" y2="800.5" stroke="rgba(204,204,220,0.12)" stroke-width="1" /><line x1="77" y1="821.5" x2="761.3" y2="821.5" stroke="rgba(204,204,220,0.12)" stroke-width="1" /><line x1="120.5" y1="684" x2="120.5" y2="835" stroke="rgba(204,204,220,0.12)" stroke-width="1" /><line x1="234.5" y1="684" x2="234.5" y2="835" stroke="rgba(204,204,220,0.12)" stroke-width="1" /><line x1="348.5" y1="684" x2="348.5" y2="835" stroke="rgba(204,204,220,0.12)" stroke-width="1" /><line x1="462.5" y1="684" x2="462.5" y2="835" stroke="rgba(204,204,220,0.12)" stroke-width="1" /><line x1="576.5" y1="684" x2="576.5" y2="835" stroke="rgba(204,204,220,0.12)" stroke-width="1" /><line x1="690.5" y1="684" x2="690.5" y2="835" stroke="rgba(204,204,220,0.12)" stroke-width="1" /><polyline points="103.2,709.8 114.0,705.3 118.0,705.3 123.0,705.3 128.0,705.4 133.0,706.3 138.0,705.4 143.0,705.1 148.0,705.1 153.0,705.4 158.0,706.3 163.0,705.6 168.0,705.4 173.0,706.3 178.0,706.3 183.0,705.0 188.0,706.3 193.0,706.3 198.0,706.3 203.0,705.3 208.0,705.3 213.0,705.3 218.0,705.3 223.0,706.3 228.0,705.6 233.0,705.4 238.0,705.1 243.0,706.3 248.0,706.3 253.0,705.2 258.0,705.2 263.0,705.5 268.0,706.3 273.0,706.3 278.0,705.3 283.0,705.2 288.0,706.3 293.0,705.5 298.0,706.3 303.0,706.3 308.0,705.6 313.0,705.1 318.0,706.3 323.0,706.3 328.0,706.3 333.0,705.1 338.0,705.3 343.0,706.3 348.0,705.1 353.0,705.1 358.0,705.1 363.0,706.3 368.0,705.5 373.0,705.5 378.0,706.3 383.0,705.5 388.0,705.1 393.0,705.1 398.0,706.3 403.0,705.2 408.0,706.3 413.0,706.3 418.0,706.3 423.0,705.1 428.0,705.2 433.0,705.6 438.0,705.3 443.0,705.1 448.0,706.3 453.0,705.5 458.0,706.3 463.0,706.3 468.0,705.6 473.0,706.3 478.0,705.5 483.0,705.3 488.0,706.3 493.0,706.3 498.0,705.1 503.0,705.2 508.0,705.4 513.0,706.3 518.0,706.3 523.0,705.0 528.0,706.3 533.0,705.5 538.0,705.2 543.0,705.1 548.0,706.3 553.0,706.3 558.0,705.0 563.0,706.3 568.0,705.3 573.0,706.3 578.0,705.5 583.0,705.4 588.0,705.4 593.0,706.3 598.0,706.3 603.0,706.3 608.0,705.4 613.0,705.0 618.0,705.3 623.0,705.2 628.0,705.0 633.0,705.4 638.0,705.4 643.0,705.5 648.0,705.2 653.0,705.5 658.0,705.3 663.0,705.5 668.0,705.4 673.0,705.3 678.0,705.0 683.0,705.6 688.0,705.4 693.0,705.4 698.0,705.3 703.0,705.1 708.0,705.0 713.0,705.3 718.0,706.3 723.0,705.3 728.0,705.6 733.0,706.3 738.0,706.3 743.0,705.4 748.0,706.3 753.0,706.3 758.0,705.4 758.4,704.8" fill="none" stroke="#73bf69" stroke-width="1.5"/><polyline points="103.2,769.8 105.0,781.0 107.6,791.0 114.4,810.4 119.0,810.4 124.0,810.4 129.0,810.4 134.0,810.4 139.0,810.4 144.0,810.4 149.0,811.3 154.0,810.4 159.0,810.4 164.0,810.4 169.0,810.4 174.0,811.3 179.0,810.4 184.0,810.4 189.0,810.4 194.0,810.4 199.0,811.3 204.0,810.4 209.0,810.4 214.0,810.4 219.0,810.4 224.0,811.3 229.0,810.4 234.0,811.3 239.0,810.4 244.0,811.3 249.0,811.3 254.0,810.4 259.0,810.4 264.0,810.4 269.0,810.4 274.0,810.4 279.0,810.4 284.0,810.4 289.0,810.4 294.0,810.4 299.0,810.4 304.0,810.4 309.0,810.4 314.0,810.4 319.0,810.4 324.0,810.4 329.0,810.4 334.0,811.3 339.0,811.3 344.0,811.3 349.0,810.4 354.0,810.4 359.0,811.3 364.0,810.4 369.0,810.4 374.0,810.4 379.0,810.4 384.0,810.4 389.0,810.4 394.0,810.4 399.0,810.4 404.0,811.3 409.0,810.4 414.0,811.3 419.0,810.4 424.0,810.4 429.0,811.3 434.0,810.4 439.0,810.4 444.0,810.4 449.0,811.3 454.0,811.3 459.0,811.3 464.0,810.4 469.0,811.3 474.0,810.4 479.0,810.4 484.0,810.4 489.0,810.4 494.0,810.4 499.0,810.4 504.0,810.4 509.0,811.3 514.0,810.4 519.0,810.4 524.0,810.4 529.0,811.3 534.0,810.4 539.0,811.3 544.0,810.4 549.0,810.4 554.0,810.4 559.0,810.4 564.0,810.4 569.0,810.4 574.0,810.4 579.0,810.4 584.0,811.3 589.0,811.3 594.0,811.3 599.0,810.4 604.0,810.4 609.0,811.3 614.0,811.3 619.0,810.4 624.0,810.4 629.0,810.4 634.0,810.4 639.0,810.4 644.0,810.4 649.0,810.4 654.0,810.4 659.0,811.3 664.0,810.4 669.0,811.3 674.0,810.4 679.0,810.4 684.0,811.3 689.0,810.4 694.0,810.4 699.0,810.4 704.0,810.4 709.0,811.3 714.0,810.4 719.0,811.3 724.0,810.4 729.0,810.4 734.0,810.4 739.0,810.4 744.0,810.4 749.0,810.4 754.0,810.4 758.4,810.4" fill="none" stroke="#f2cc0c" stroke-width="1.5"/><text x="71.7" y="698.1" font-size="12" fill="#c7c7d1" font-weight="400" text-anchor="end" letter-spacing="0.15" >2 kb/s</text><text x="71.7" y="720.1" font-size="12" fill="#c7c7d1" font-weight="400" text-anchor="end" letter-spacing="0.15" >0 b/s</text><text x="71.7" y="740.1" font-size="12" fill="#c7c7d1" font-weight="400" text-anchor="end" letter-spacing="0.15" >-2 kb/s</text><text x="71.7" y="762.1" font-size="12" fill="#c7c7d1" font-weight="400" text-anchor="end" letter-spacing="0.15" >-4 kb/s</text><text x="71.7" y="782.1" font-size="12" fill="#c7c7d1" font-weight="400" text-anchor="end" letter-spacing="0.15" >-6 kb/s</text><text x="71.7" y="804.1" font-size="12" fill="#c7c7d1" font-weight="400" text-anchor="end" letter-spacing="0.15" >-8 kb/s</text><text x="71.7" y="825.1" font-size="12" fill="#c7c7d1" font-weight="400" text-anchor="end" letter-spacing="0.15" >-10 kb/s</text><text x="120.5" y="849.8" font-size="12" fill="#c7c7d1" font-weight="400" text-anchor="middle" letter-spacing="0.2" >10:30</text><text x="234.5" y="849.8" font-size="12" fill="#c7c7d1" font-weight="400" text-anchor="middle" letter-spacing="0.2" >10:35</text><text x="348.5" y="849.8" font-size="12" fill="#c7c7d1" font-weight="400" text-anchor="middle" letter-spacing="0.2" >10:40</text><text x="462.5" y="849.8" font-size="12" fill="#c7c7d1" font-weight="400" text-anchor="middle" letter-spacing="0.2" >10:45</text><text x="576.5" y="849.8" font-size="12" fill="#c7c7d1" font-weight="400" text-anchor="middle" letter-spacing="0.2" >10:50</text><text x="690.5" y="849.8" font-size="12" fill="#c7c7d1" font-weight="400" text-anchor="middle" letter-spacing="0.2" >10:55</text><rect x="26" y="868.9000000000001" width="13.5" height="3.6" rx="1.8" fill="#73bf69"/><text x="47.5" y="874.9000000000001" font-size="12" fill="#ccccdc" font-weight="400" text-anchor="start" textLength="61.7" lengthAdjust="spacing" >Rx enp2s0</text><rect x="120" y="868.9000000000001" width="13.5" height="3.6" rx="1.8" fill="#fade2a"/><text x="140.79999999999998" y="874.9000000000001" font-size="12" fill="#ccccdc" font-weight="400" text-anchor="start" textLength="61.1" lengthAdjust="spacing" >Tx enp2s0</text><rect x="786.5" y="635.5" width="764.0" height="257.0" rx="6" fill="#181b1f" stroke="#2e3035" stroke-width="1"/><text x="794.8000000000001" y="657.5" font-size="14" fill="#ccccdc" font-weight="400" text-anchor="start" textLength="157" lengthAdjust="spacing" stroke="#ccccdc" stroke-width="0.3" >Disk Space Used Basic</text><line x1="1540.0" y1="891.0" x2="1549.0" y2="882.0" stroke="rgba(204,204,220,0.3)" stroke-width="1.2" /><line x1="1545.0" y1="891.0" x2="1549.0" y2="887.0" stroke="rgba(204,204,220,0.3)" stroke-width="1.2" /><circle cx="976" cy="652.5" r="6.2" stroke="rgba(204,204,220,0.65)" stroke-width="1.3" fill="none"/><line x1="976" y1="652.0" x2="976" y2="655.5" stroke="rgba(204,204,220,0.65)" stroke-width="1.4" /><line x1="976" y1="649.3" x2="976" y2="650.3" stroke="rgba(204,204,220,0.65)" stroke-width="1.4" /><rect x="856" y="821.3" width="675.5999999999999" height="10.2" rx="0" fill="#405a40"/><line x1="836.4" y1="684.5" x2="1534.5" y2="684.5" stroke="rgba(204,204,220,0.12)" stroke-width="1" /><line x1="836.4" y1="713.5" x2="1534.5" y2="713.5" stroke="rgba(204,204,220,0.12)" stroke-width="1" /><line x1="836.4" y1="743.5" x2="1534.5" y2="743.5" stroke="rgba(204,204,220,0.12)" stroke-width="1" /><line x1="836.4" y1="772.5" x2="1534.5" y2="772.5" stroke="rgba(204,204,220,0.12)" stroke-width="1" /><line x1="836.4" y1="802.5" x2="1534.5" y2="802.5" stroke="rgba(204,204,220,0.12)" stroke-width="1" /><line x1="836.4" y1="831.5" x2="1534.5" y2="831.5" stroke="rgba(204,204,220,0.12)" stroke-width="1" /><line x1="880.5" y1="684" x2="880.5" y2="835" stroke="rgba(204,204,220,0.12)" stroke-width="1" /><line x1="996.5" y1="684" x2="996.5" y2="835" stroke="rgba(204,204,220,0.12)" stroke-width="1" /><line x1="1112.5" y1="684" x2="1112.5" y2="835" stroke="rgba(204,204,220,0.12)" stroke-width="1" /><line x1="1229.5" y1="684" x2="1229.5" y2="835" stroke="rgba(204,204,220,0.12)" stroke-width="1" /><line x1="1345.5" y1="684" x2="1345.5" y2="835" stroke="rgba(204,204,220,0.12)" stroke-width="1" /><line x1="1461.5" y1="684" x2="1461.5" y2="835" stroke="rgba(204,204,220,0.12)" stroke-width="1" /><line x1="856" y1="821.3" x2="1531.6" y2="821.3" stroke="#73bf69" stroke-width="1.5" /><text x="830" y="688.1" font-size="12" fill="#c7c7d1" font-weight="400" text-anchor="end" letter-spacing="0.15" >100%</text><text x="830" y="717.1" font-size="12" fill="#c7c7d1" font-weight="400" text-anchor="end" letter-spacing="0.15" >80%</text><text x="830" y="747.1" font-size="12" fill="#c7c7d1" font-weight="400" text-anchor="end" letter-spacing="0.15" >60%</text><text x="830" y="776.1" font-size="12" fill="#c7c7d1" font-weight="400" text-anchor="end" letter-spacing="0.15" >40%</text><text x="830" y="806.1" font-size="12" fill="#c7c7d1" font-weight="400" text-anchor="end" letter-spacing="0.15" >20%</text><text x="830" y="835.1" font-size="12" fill="#c7c7d1" font-weight="400" text-anchor="end" letter-spacing="0.15" >0%</text><text x="880.5" y="849.8" font-size="12" fill="#c7c7d1" font-weight="400" text-anchor="middle" letter-spacing="0.2" >10:30</text><text x="996.5" y="849.8" font-size="12" fill="#c7c7d1" font-weight="400" text-anchor="middle" letter-spacing="0.2" >10:35</text><text x="1112.5" y="849.8" font-size="12" fill="#c7c7d1" font-weight="400" text-anchor="middle" letter-spacing="0.2" >10:40</text><text x="1229.5" y="849.8" font-size="12" fill="#c7c7d1" font-weight="400" text-anchor="middle" letter-spacing="0.2" >10:45</text><text x="1345.5" y="849.8" font-size="12" fill="#c7c7d1" font-weight="400" text-anchor="middle" letter-spacing="0.2" >10:50</text><text x="1461.5" y="849.8" font-size="12" fill="#c7c7d1" font-weight="400" text-anchor="middle" letter-spacing="0.2" >10:55</text><rect x="798.8" y="868.9000000000001" width="13.5" height="3.6" rx="1.8" fill="#73bf69"/><text x="822" y="874.9000000000001" font-size="12" fill="#ccccdc" font-weight="400" text-anchor="start" letter-spacing="0" >/</text></svg></body></html>
